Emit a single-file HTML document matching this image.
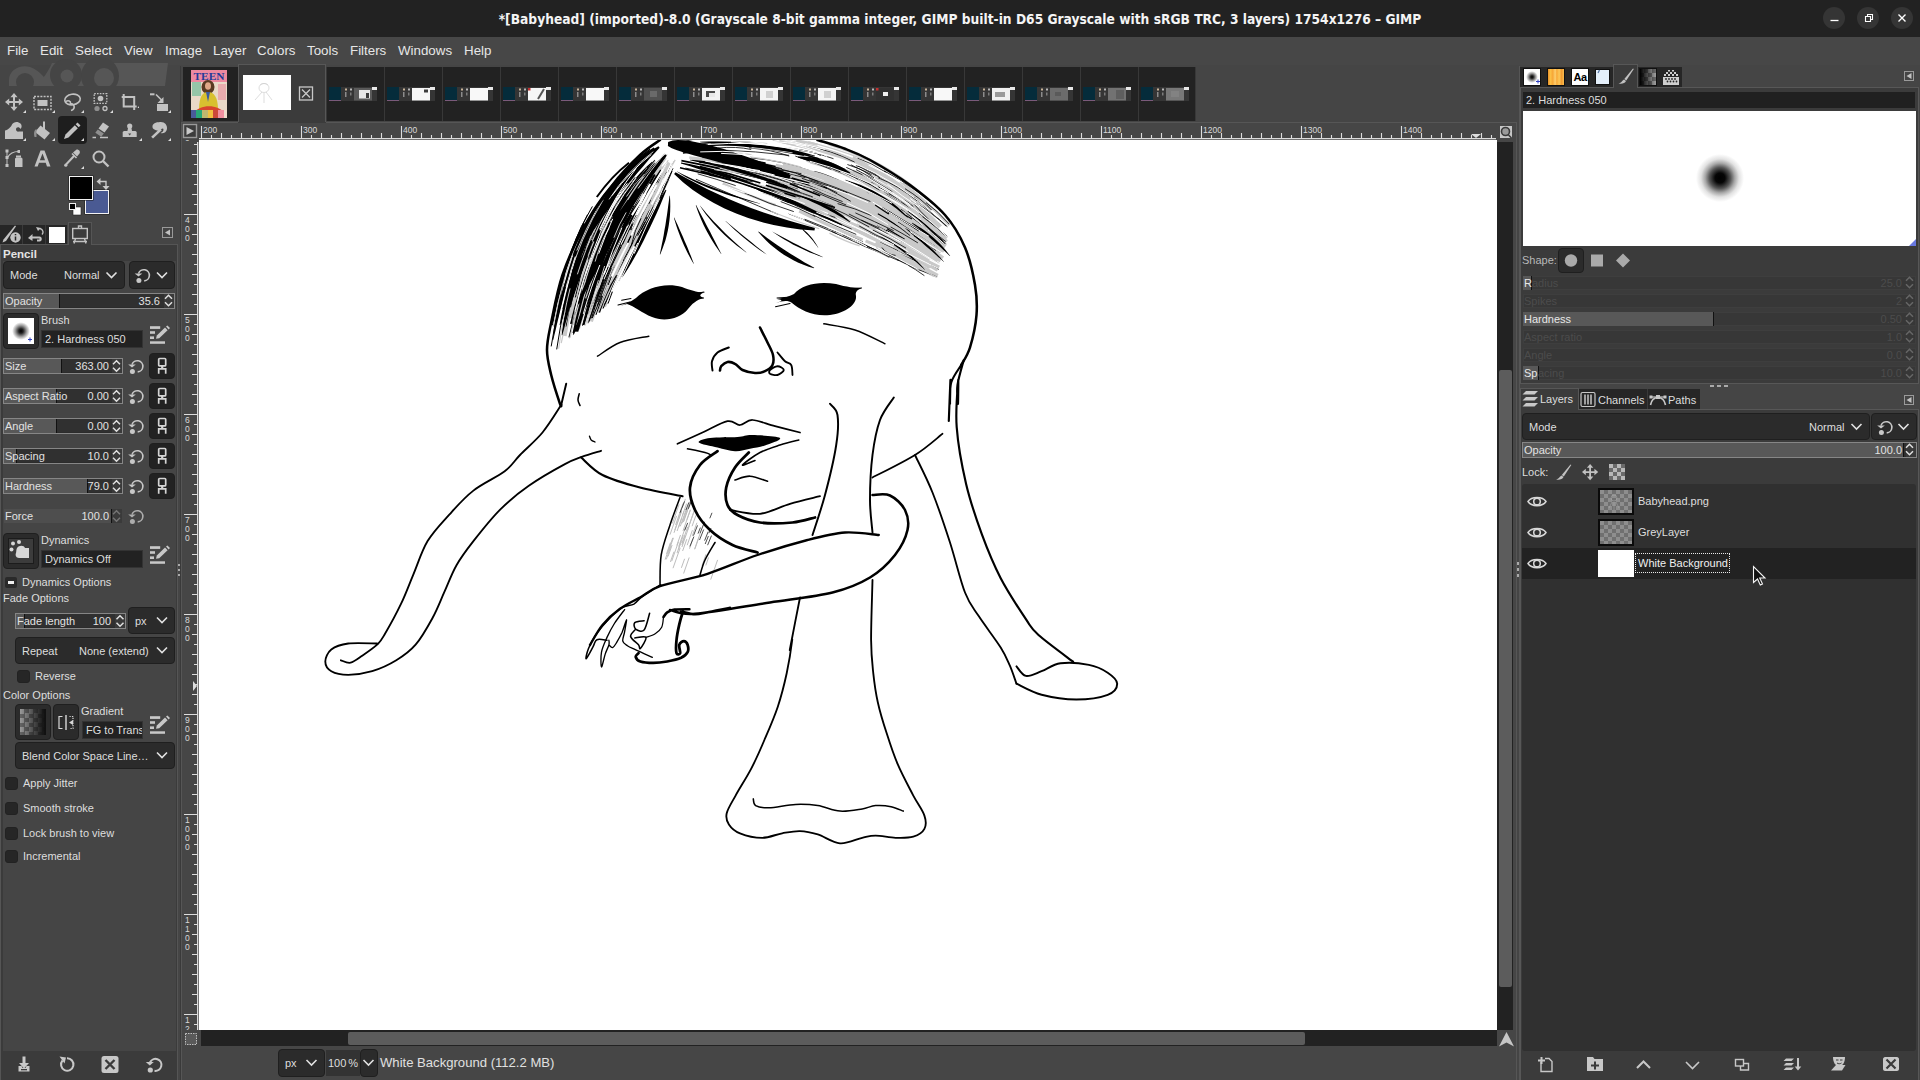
<!DOCTYPE html>
<html lang="en">
<head>
<meta charset="utf-8">
<title>GIMP</title>
<style>
*{box-sizing:border-box}
html,body{margin:0;padding:0}
body{width:1920px;height:1080px;position:relative;overflow:hidden;background:#454545;font-family:"Liberation Sans",sans-serif;font-size:11px;color:#dedede;line-height:1}
.abs{position:absolute}
#title{position:absolute;left:0;top:0;width:1920px;height:37px;background:#222222}
#title .t{position:absolute;left:0;width:1920px;top:13px;text-align:center;font-family:"DejaVu Sans Condensed","DejaVu Sans","Liberation Sans",sans-serif;font-weight:bold;font-size:13.66px;color:#f4f4f4;white-space:nowrap}
.wbtn{position:absolute;top:7px;width:22px;height:22px;border-radius:11px;background:#353535}
#menu{position:absolute;left:0;top:37px;width:1920px;height:28px;background:#474747}
#menu span{position:absolute;top:7px;font-size:13.33px;color:#e6e6e6;white-space:nowrap}
.lbl{position:absolute;white-space:nowrap;color:#dedede;font-size:11px}
.dark{background:#2b2b2b}
.btn{position:absolute;background:#2b2b2b;border:1px solid #1f1f1f;border-radius:4px}
.spin{position:absolute;height:16px;background:#303030;border:1px solid #868686;box-shadow:inset 0 -1px 0 #2c2c2c}
.spin .fill{position:absolute;left:0;top:0;bottom:0;background:#585858;border-right:1px solid #111}
.spin:after{content:'';position:absolute;right:0;top:0;bottom:0;width:10px;background:#3a3a3a}
.spin .l{position:absolute;left:1px;top:2px;font-size:11px;color:#e2e2e2;white-space:nowrap}
.spin .v{position:absolute;right:13px;top:2px;font-size:11px;color:#e2e2e2;white-space:nowrap}
.chk{position:absolute;width:11px;height:11px;background:#262626;border:1px solid #222;border-radius:3px}
svg{position:absolute;overflow:visible}
.dsl{left:1523px;width:393px;height:14px;background:#373737;box-shadow:inset 0 0 0 1px #3e3e3e;font-size:11px}
.dsl i{position:absolute;left:0;top:0;bottom:0;background:#585858;border-right:1px solid #111}
.dsl b{position:absolute;left:1px;top:2px;font-weight:normal;color:#e8e8e8}
.dsl s{position:absolute;top:2px;text-decoration:none;color:#4c4c4c}
.dsl u{position:absolute;right:14px;top:2px;text-decoration:none;color:#4c4c4c}
</style>
</head>
<body>
<div id="title">
<div class="t">*[Babyhead] (imported)-8.0 (Grayscale 8-bit gamma integer, GIMP built-in D65 Grayscale with sRGB TRC, 3 layers) 1754x1276 – GIMP</div>
<div class="wbtn" style="left:1823px"></div>
<div class="wbtn" style="left:1857px"></div>
<div class="wbtn" style="left:1891px"></div>
<svg style="left:1823px;top:7px" width="90" height="22" viewBox="0 0 90 22">
<path d="M7.5 13.5h8" stroke="#fff" stroke-width="1.3" fill="none"/>
<path d="M42.5 9.5h5v5h-5z M44.5 9.5v-2h5v5h-2" stroke="#fff" stroke-width="1.1" fill="none"/>
<path d="M75.5 7.5l7 7M82.5 7.5l-7 7" stroke="#fff" stroke-width="1.4" fill="none"/>
</svg>
</div>
<div id="menu">
<span style="left:7px">File</span><span style="left:40px">Edit</span><span style="left:75px">Select</span><span style="left:124px">View</span><span style="left:165px">Image</span><span style="left:213px">Layer</span><span style="left:257px">Colors</span><span style="left:307px">Tools</span><span style="left:350px">Filters</span><span style="left:398px">Windows</span><span style="left:464px">Help</span>
</div>
<!-- TOOLBOX -->
<svg style="left:0;top:60px" width="180" height="120" viewBox="0 60 180 120">
<!-- wilber banner -->
<g fill="#565656">
<path d="M9 86 L9 80 C9 70 20 64 30 67 C40 70 46 80 52 86 Z"/>
<path d="M52 63 L168 63 L165 86 L30 86 C40 84 46 76 52 63Z" />
</g>
<g fill="#454545">
<circle cx="25" cy="82" r="9"/>
<circle cx="66" cy="75" r="16"/>
<circle cx="100" cy="76" r="19"/>
<rect x="0" y="86" width="180" height="10"/>
</g>
<g fill="#565656"><circle cx="67" cy="76" r="6.5"/><circle cx="104" cy="78" r="10"/></g>
<rect x="0" y="86" width="180" height="6" fill="#454545"/>
<!-- selected tool bg -->
<rect x="58" y="116" width="29" height="28" rx="4" fill="#1e1e1e"/>
<g fill="#c2c2c2" stroke="none">
<!-- move -->
<g transform="translate(5,93)"><path d="M9 0l3.6 4.2H10v3.8h3.8V5.4L18 9l-4.2 3.6V10H10v3.8h2.6L9 18l-3.6-4.2H8V10H4.2v2.6L0 9l4.2-3.6V8H8V4.2H5.4z"/></g>
<!-- rect select -->
<g transform="translate(33.5,93)"><rect x="4" y="7" width="10" height="6"/><path d="M0.5 3.5h17v13h-17z" fill="none" stroke="#c2c2c2" stroke-width="1.4" stroke-dasharray="2 1.2"/></g>
<!-- lasso -->
<g transform="translate(63,93)" fill="none" stroke="#c2c2c2" stroke-width="1.6"><ellipse cx="9.5" cy="6.5" rx="7.8" ry="5.3" transform="rotate(-8 9.5 6.5)"/><path d="M3 8.5c2-1.5 5-.5 4.5 2 4 0 5.500 5.500 .5 7"/></g>
<!-- fuzzy/by color -->
<g transform="translate(91.500,93)"><circle cx="9" cy="5.500" r="2.800"/><path d="M2.700 0.700h12.600v9.600h-12.600z" fill="none" stroke="#c2c2c2" stroke-width="1.300" stroke-dasharray="1.600 1.200"/><circle cx="5.500" cy="15.500" r="2.600" fill="#8e8e8e"/><circle cx="13.500" cy="15.500" r="2" fill="none" stroke="#c2c2c2" stroke-width="1.300"/></g>
<!-- crop -->
<g transform="translate(120.700,93)" fill="none" stroke="#c2c2c2" stroke-width="2"><path d="M3 1v12.500h13"/><path d="M1 4h12.500v13" /></g>
<!-- unified transform -->
<g transform="translate(150,93)"><rect x="7" y="11" width="11" height="7"/><rect x="0" y="0.300" width="4.500" height="2"/><path d="M6 1.500l6.500 6.500" stroke="#c2c2c2" stroke-width="1.600" fill="none"/><path d="M13.500 4v6h-6z"/></g>
<!-- warp -->
<g transform="translate(5,121)"><path d="M0 18V9.500C3 9 6 6 7 3.500 8.500 0.500 13 0 15.500 2.500c1.500 1.500 1.500 4 0 5.500-1 -2.500-4.500-2.500-4.500 .5 0 1.500 1.500 2.500 3 2h4V18z"/></g>
<!-- bucket -->
<g transform="translate(33.500,121)"><path d="M9.500 0.500h2v8h-2z"/><path d="M7 4.500l9.500 7.500-5.500 6.500-9.500-7.500z"/><path d="M3 8c-2.500 1-3 4-2 8h2z" fill="#8e8e8e"/></g>
<!-- pencil -->
<g transform="translate(63,121)"><path d="M14.500 1.500l3 3-1.800 1.800-3-3z"/><path d="M11.800 4.200l3 3L5.500 16.500 1 18l1.500-4.500z"/></g>
<!-- eraser -->
<g transform="translate(91.500,121)"><path d="M11.500 1.500l6 4-4.500 6-6-4z"/><path d="M6.300 8.500l6 4-2.500 3.300-6-4z" fill="#8e8e8e"/><path d="M1 16.500h3.500M8.500 16.500h8" stroke="#c2c2c2" stroke-width="1.300" fill="none"/></g>
<!-- stamp -->
<g transform="translate(120.700,121)"><circle cx="9" cy="5" r="2.600"/><path d="M7.500 6h3l1 5h-5z"/><path d="M2 11.500c0-1 1-1.500 2-1.500h10c1 0 2 .5 2 1.500V16H2z"/><path d="M7.500 12.500h3L9 14.500z" fill="#454545"/></g>
<!-- smudge/dodge -->
<g transform="translate(150,121)"><path d="M10 1c4.500-.5 7.500 3 7 7-.5 3.500-4 5-6.500 4 3-1 3.500-3.500 2.500-4.500-1.500 0-3 2-4.500 2.500C5 9 2 8 2.500 5 3 2 6.500 1.300 10 1z"/><path d="M10 7.500l1.800 1.800L3 17.500 1.200 15.700z"/></g>
<!-- paths -->
<g transform="translate(5,149)"><rect x="0.500" y="0.500" width="3" height="3"/><rect x="0.500" y="7" width="3" height="3"/><rect x="0.500" y="15" width="3" height="3"/><path d="M2 2v15" stroke="#c2c2c2" stroke-width="1" fill="none"/><path d="M2.500 8.500C5 4 9 2.500 13.500 2.500" stroke="#c2c2c2" stroke-width="1.200" fill="none"/><rect x="12.500" y="1" width="2.500" height="3"/><rect x="11" y="6.500" width="5" height="2"/><path d="M10 10c0-1 1-1.500 2-1.500h3.500c1 0 2 .5 2 1.500v8H10z"/></g>
<!-- text A -->
<g transform="translate(33.500,149)"><path d="M7 1.500h4L17 17.500h-3.500l-1.300-3.800H5.500L4.200 17.500H1z M9 4.500L6.400 11.200h5.100z"/></g>
<!-- color picker -->
<g transform="translate(63,149)"><path d="M13 1c2-1.500 5 1.500 3.500 3.500l-2.500 3-4-4z"/><path d="M9 4.500l4.500 4.500" stroke="#c2c2c2" stroke-width="1.600" fill="none"/><path d="M10.500 6l1.500 1.500L4 16l-1.500-1.500z"/><circle cx="2.800" cy="16.200" r="1.600"/></g>
<!-- zoom -->
<g transform="translate(91.500,149)" fill="none" stroke="#c2c2c2"><circle cx="7.500" cy="8" r="5.500" stroke-width="2"/><path d="M11.500 12l5.500 5.500" stroke-width="2.400"/></g>
</g>
<!-- corner marks -->
<g fill="#dcdcdc">
<path d="M26 110v3h-3z"/><path d="M55 110v3h-3z"/><path d="M84 110v3h-3z"/><path d="M113 110v3h-3z"/><path d="M171 110v3h-3z"/>
<path d="M26 138v3h-3z"/><path d="M55 138v3h-3z"/><path d="M84 138v3h-3z"/><path d="M142 138v3h-3z"/><path d="M171 138v3h-3z"/>
<path d="M84 166v3h-3z"/>
<path d="M139 106v2h-1.500z"/>
</g>
</svg>
<!-- FG/BG colours -->
<div class="abs" style="left:85px;top:190px;width:24px;height:24px;background:#4a5a93;border:1px solid #f2f2f2;box-shadow:0 0 0 .5px #1c1c1c"></div>
<div class="abs" style="left:69px;top:176px;width:24px;height:24px;background:#000;border:1px solid #f2f2f2;box-shadow:0 0 0 .5px #1c1c1c"></div>
<svg style="left:66px;top:174px" width="50" height="44" viewBox="66 174 50 44">
<path d="M98.500 181.500h7.500v6.500" fill="none" stroke="#c8c8c8" stroke-width="1.400"/>
<path d="M100.500 178v7l-4-3.500z M102.500 186h7l-3.500 4z" fill="#c8c8c8"/>
<rect x="73" y="207" width="8" height="8" fill="#fff" stroke="#222" stroke-width=".6"/>
<rect x="69.500" y="203.500" width="6" height="6" fill="#000" stroke="#eee" stroke-width="1"/>
</svg>
<!-- tool options tab header -->
<div class="abs" style="left:0;top:225px;width:67px;height:20px;background:#262626"></div>
<div class="abs" style="left:22px;top:225px;width:1px;height:20px;background:#3a3a3a"></div>
<div class="abs" style="left:45px;top:225px;width:1px;height:20px;background:#3a3a3a"></div>
<div class="abs" style="left:0;top:244px;width:178px;height:836px;background:#3b3b3b;border:1px solid #555;border-bottom:none"></div><div class="abs" style="left:3px;top:261px;width:173px;height:790px;background:#454545"></div>
<div class="abs" style="left:68px;top:222px;width:24px;height:23px;background:#3b3b3b;border:1px solid #555;border-bottom:none"></div>
<div class="abs" style="left:49px;top:227px;width:16px;height:16px;background:#fff"></div>
<svg style="left:0;top:222px" width="180" height="24" viewBox="0 222 180 24">
<g fill="#c2c2c2">
<path d="M15 225.500l1 .8L6 241l-3.500 1.500 1-3z"/>
<circle cx="15.500" cy="237.500" r="5"/>
<path d="M28 238l4.500-4v2.500h7c3 0 3 5 0 5h-2.500v-2h2c1 0 1-1 0-1h-6.500v2.500z" />
<path d="M40 228.500c3 1 4 4 2 6" fill="none" stroke="#c2c2c2" stroke-width="1.400"/>
<path d="M36 227l5 1-3 3z"/>
</g>
<circle cx="15.500" cy="237.500" r="5" fill="#c2c2c2"/>
<path d="M15.500 236.500v4M15.500 234v1.300" stroke="#262626" stroke-width="1.500"/>
<g fill="none" stroke="#c2c2c2" stroke-width="1.400">
<rect x="72.700" y="228.500" width="14.600" height="10"/>
<path d="M78.500 228v-2h3v2M75.500 238.500l-1.500 5M84.500 238.500l1.500 5M73 241.500h14"/>
</g>
<rect x="162.500" y="227.500" width="10" height="10" fill="none" stroke="#9a9a9a" stroke-width="1"/>
<path d="M170 229.500v6l-5-3z" fill="#c2c2c2"/>
</svg>
<div class="lbl" style="left:3px;top:249px;font-weight:bold;font-size:11.500px;color:#e4e4e4">Pencil</div>
<!-- Mode -->
<div class="btn" style="left:3px;top:261px;width:122px;height:28px"></div>
<div class="lbl" style="left:10px;top:270px">Mode</div>
<div class="lbl" style="left:64px;top:270px">Normal</div>
<div class="btn" style="left:129px;top:261px;width:46px;height:28px"></div>
<svg style="left:0;top:260px" width="180" height="30" viewBox="0 260 180 30">
<path d="M106.500 272.500l5 5 5-5" fill="none" stroke="#e0e0e0" stroke-width="1.600"/>
<path d="M157 272.500l5 5 5-5" fill="none" stroke="#e0e0e0" stroke-width="1.600"/>

</svg>
<!-- Opacity -->
<div class="spin" style="left:3px;top:293px;width:172px"><div class="fill" style="width:56px"></div><div class="l">Opacity</div><div class="v" style="right:14px">35.6</div></div>
<!-- Brush -->
<div class="btn" style="left:3px;top:313px;width:36px;height:36px"></div>
<div class="abs" style="left:8px;top:318px;width:26px;height:26px;background:radial-gradient(circle at 50% 50%,#000 0,#222 12%,#999 30%,#fff 48%)"></div>
<div class="lbl" style="left:41px;top:315px">Brush</div>
<div class="abs" style="left:41px;top:330px;width:102px;height:18px;background:#222;border:1px solid #333"></div>
<div class="lbl" style="left:45px;top:334px">2. Hardness 050</div>
<!-- sliders -->
<div class="spin" style="left:3px;top:358px;width:120px"><div class="fill" style="width:58px"></div><div class="l">Size</div><div class="v">363.00</div></div>
<div class="spin" style="left:3px;top:388px;width:120px"><div class="fill" style="width:53px"></div><div class="l">Aspect Ratio</div><div class="v">0.00</div></div>
<div class="spin" style="left:3px;top:418px;width:120px"><div class="fill" style="width:53px"></div><div class="l">Angle</div><div class="v">0.00</div></div>
<div class="spin" style="left:3px;top:448px;width:120px"><div class="fill" style="width:13px"></div><div class="l">Spacing</div><div class="v">10.0</div></div>
<div class="spin" style="left:3px;top:478px;width:120px"><div class="fill" style="width:84px"></div><div class="l">Hardness</div><div class="v">79.0</div></div>
<div class="spin" style="left:3px;top:508px;width:120px;border-color:#454545;background:#454545;box-shadow:none"><div class="fill" style="width:108px;background:#4e4e4e"></div><div class="l">Force</div><div class="v">100.0</div></div>
<div class="btn" style="left:149px;top:353px;width:26px;height:26px;background:#222"></div>
<div class="btn" style="left:149px;top:383px;width:26px;height:26px;background:#222"></div>
<div class="btn" style="left:149px;top:413px;width:26px;height:26px;background:#222"></div>
<div class="btn" style="left:149px;top:443px;width:26px;height:26px;background:#222"></div>
<div class="btn" style="left:149px;top:473px;width:26px;height:26px;background:#222"></div>
<svg style="left:0;top:290px" width="180" height="240" viewBox="0 290 180 240">
<defs>
<g id="spn"><path d="M0 4.200l3.500-3.500 3.500 3.500M0 7.800l3.500 3.500 3.500-3.500" fill="none" stroke="#e0e0e0" stroke-width="1.500"/></g>
<g id="rst"><path d="M4 6.400A5.600 5.600 0 1 1 9.700 13.900" fill="none" stroke="#c8c8c8" stroke-width="1.600"/><path d="M.200 6.400h7.600l-3.800 3.200z" fill="#c8c8c8"/><circle cx="4.400" cy="13.500" r="2.500" fill="#c8c8c8"/></g>
<g id="lnk" fill="none" stroke="#d4d4d4" stroke-width="1.700"><rect x="1.700" y="1" width="7" height="7.400" rx="1"/><path d="M1.700 16.200V11.300H8.700V16.200"/><path d="M5.200 8.400v3" stroke-width="2.200"/></g>
<g id="edt" fill="#c8c8c8"><rect x="0" y="1.200" width="10.200" height="2.700"/><rect x="0" y="6.200" width="5" height="2.600"/><rect x="0" y="11.400" width="4" height="2.600"/><rect x="0" y="16.300" width="15" height="2.500"/><path d="M6 13.700L6.800 10.600 15 2.600 17.600 5.200 9.200 13.200z"/><path d="M16 1.600L17.400.400 20 3 18.600 4.400z"/></g>
</defs>
<use href="#spn" x="165" y="294.500"/>
<use href="#spn" x="113" y="360"/><use href="#spn" x="113" y="390"/><use href="#spn" x="113" y="420"/><use href="#spn" x="113" y="450"/><use href="#spn" x="113" y="480"/>
<use href="#spn" x="113" y="510" opacity=".35"/>
<use href="#rst" x="128" y="358"/><use href="#rst" x="128" y="388"/><use href="#rst" x="128" y="418"/><use href="#rst" x="128" y="448"/><use href="#rst" x="128" y="478"/><use href="#rst" x="128" y="508" opacity=".8"/>
<use href="#lnk" x="157" y="357.5"/><use href="#lnk" x="157" y="387.5"/><use href="#lnk" x="157" y="417.5"/><use href="#lnk" x="157" y="447.5"/><use href="#lnk" x="157" y="477.5"/>
<use href="#edt" x="150" y="325"/>
<path d="M28 339.500h4M30 337.500v4" stroke="#3040c0" stroke-width="1"/>
</svg>
<svg style="left:134px;top:267px" width="16" height="17" viewBox="0 0 16 17"><use href="#rst" x="0.500" y="0"/></svg>
<!-- Dynamics -->
<div class="btn" style="left:3px;top:533px;width:36px;height:36px"></div>
<div class="abs" style="left:8px;top:538px;width:26px;height:26px;background:#3c3c3c;border:1px solid #1c1c1c"></div>
<div class="lbl" style="left:41px;top:535px">Dynamics</div>
<div class="abs" style="left:41px;top:550px;width:102px;height:18px;background:#222;border:1px solid #333"></div>
<div class="lbl" style="left:45px;top:554px">Dynamics Off</div>
<div class="abs" style="left:5px;top:577px;width:12px;height:11px;background:#2a2a2a;border-radius:2px"></div>
<div class="abs" style="left:8px;top:581px;width:6px;height:3px;background:#f0f0f0"></div>
<div class="lbl" style="left:22px;top:577px">Dynamics Options</div>
<div class="lbl" style="left:3px;top:593px">Fade Options</div>
<div class="spin" style="left:15px;top:613px;width:111px"><div class="fill" style="width:9px;background:#585858"></div><div class="l">Fade length</div><div class="v" style="right:14px">100</div></div>
<div class="btn" style="left:128px;top:607px;width:47px;height:27px"></div>
<div class="lbl" style="left:135px;top:616px">px</div>
<div class="btn" style="left:15px;top:637px;width:160px;height:27px"></div>
<div class="lbl" style="left:22px;top:646px">Repeat</div>
<div class="lbl" style="left:79px;top:646px">None (extend)</div>
<div class="chk" style="left:17px;top:670px;width:13px;height:13px"></div>
<div class="lbl" style="left:35px;top:671px">Reverse</div>
<div class="lbl" style="left:3px;top:690px">Color Options</div>
<div class="btn" style="left:15px;top:704px;width:36px;height:36px"></div>
<div class="abs" style="left:20px;top:709px;width:26px;height:26px;background:linear-gradient(90deg,rgba(17,17,17,0),rgba(17,17,17,.55) 50%,#111 95%),repeating-conic-gradient(#666 0 25%,#999 0 50%) 0 0/9px 9px"></div>
<div class="btn" style="left:53px;top:704px;width:26px;height:36px"></div>
<div class="lbl" style="left:81px;top:706px">Gradient</div>
<div class="abs" style="left:82px;top:721px;width:61px;height:18px;background:#222;border:1px solid #333;overflow:hidden"><span style="position:absolute;left:3px;top:3px;white-space:nowrap;font-size:11px">FG to Transparent</span></div>
<div class="btn" style="left:15px;top:742px;width:160px;height:27px"></div>
<div class="lbl" style="left:22px;top:751px">Blend Color Space Line…</div>
<div class="chk" style="left:5px;top:777px;width:13px;height:13px"></div><div class="lbl" style="left:23px;top:778px">Apply Jitter</div>
<div class="chk" style="left:5px;top:802px;width:13px;height:13px"></div><div class="lbl" style="left:23px;top:803px">Smooth stroke</div>
<div class="chk" style="left:5px;top:827px;width:13px;height:13px"></div><div class="lbl" style="left:23px;top:828px">Lock brush to view</div>
<div class="chk" style="left:5px;top:850px;width:13px;height:13px"></div><div class="lbl" style="left:23px;top:851px">Incremental</div>
<svg style="left:0;top:530px" width="180" height="550" viewBox="0 530 180 550">
<use href="#edt" x="150" y="545"/><use href="#edt" x="150" y="715"/>
<use href="#spn" x="116.500" y="615"/>
<path d="M157 617.500l5 5 5-5M157 647.500l5 5 5-5M157 752.500l5 5 5-5" fill="none" stroke="#e0e0e0" stroke-width="1.600"/>
<!-- dynamics icon -->
<g fill="#d8d8d8"><circle cx="13" cy="543.500" r="2"/><circle cx="19" cy="542" r="2"/><circle cx="11.500" cy="549.500" r="2"/><path d="M17 548c2-3 7-3 8 0l4 0v10h-10c-3 0-4-3-3-5 .5-1.500 0-3 1-5z"/></g>
<!-- flip icon -->
<g fill="none" stroke="#d8d8d8" stroke-width="1.200"><path d="M62.500 716.500h-3.500v12h3.500"/><path d="M66 715v15" stroke-width="1.400"/><path d="M69.500 716.500h3.500v12h-3.500" stroke-dasharray="1.200 1.200"/></g><path d="M73 720v5l-4-2.500z" fill="#d8d8d8"/>
<!-- bottom buttons -->
<g fill="#c8c8c8">
<path d="M22.500 1056.500h3v6.500h3.500l-5 5.500-5-5.500h3.500z"/><path d="M18.500 1066h3l1 2h3l1-2h3v5.500h-11z"/>
<rect x="101.500" y="1056" width="17" height="17" rx="2.500"/>
</g>
<rect x="21" y="1069" width="6" height="1.300" fill="#3b3b3b"/>
<path d="M105.500 1060l9 9M114.500 1060l-9 9" stroke="#3b3b3b" stroke-width="2.400"/>
<g fill="none" stroke="#c8c8c8" stroke-width="2"><path d="M62.500 1060.500A6.200 6.200 0 1 0 67 1058.300"/><path d="M150 1062.300A6 6 0 1 1 154.500 1070.800"/></g>
<g fill="#c8c8c8"><path d="M59.500 1056.500l6.500 1-1.500 6z"/><path d="M145.800 1062h8l-4 3.600z"/><circle cx="150.300" cy="1070" r="2.600"/></g>
</svg>
<!-- pane separator -->
<div class="abs" style="left:180px;top:66px;width:1px;height:1014px;background:#3a3a3a"></div>
<!-- IMAGE TABS -->
<div class="abs" style="left:183px;top:67px;width:1012px;height:54px;background:#222"></div>
<svg style="left:191px;top:70px" width="36" height="48" viewBox="0 0 36 48">
<rect width="36" height="48" fill="#e9d9c8"/>
<rect x="0" y="0" width="36" height="12" fill="#ee8aa0"/>
<text x="18" y="10" text-anchor="middle" font-family="Liberation Serif,serif" font-weight="bold" font-size="10.500" fill="#243a9a" textLength="31" lengthAdjust="spacingAndGlyphs">TEEN</text>
<rect x="1" y="12" width="9" height="14" fill="#7fc0a0" opacity=".8"/>
<rect x="27" y="14" width="8" height="16" fill="#e8a0a8" opacity=".8"/>
<ellipse cx="17" cy="17" rx="6.500" ry="7" fill="#5a3a22"/>
<ellipse cx="17" cy="16" rx="3" ry="3.800" fill="#e0a888"/>
<path d="M8 40 C8 26 12 22 17 22 C23 22 27 27 27 40z" fill="#d8c030"/>
<path d="M15 22l2 10 2-10z" fill="#3a5aa0"/>
<path d="M3 43 C8 34 28 34 33 43z" fill="#d8452f"/>
<rect x="0" y="40" width="36" height="8" fill="#efdccc"/>
<rect x="0" y="40" width="5" height="8" fill="#4a5a9a"/><rect x="5" y="40" width="6" height="8" fill="#2aa878"/><rect x="11" y="40" width="6" height="8" fill="#c0b870"/><rect x="17" y="40" width="5" height="8" fill="#f0c040"/><rect x="22" y="40" width="5" height="8" fill="#cc4a3a"/><rect x="27" y="40" width="6" height="8" fill="#f090a0"/>
</svg>
<div class="abs" style="left:238px;top:64px;width:88px;height:59px;background:#3b3b3b;border:1px solid #575757;border-bottom:none"></div>
<div class="abs" style="left:243px;top:75px;width:48px;height:35px;background:#fff"></div>
<svg style="left:243px;top:75px" width="80" height="35" viewBox="243 75 80 35">
<g fill="none" stroke="#cfcfcf" stroke-width=".7"><ellipse cx="264" cy="88" rx="5" ry="4.500"/><path d="M260 85c2-2 6-2 8 0M262 92l-7 8M266 92l6 8M264 93v10"/></g>
<rect x="299.500" y="87" width="13" height="13" fill="none" stroke="#c8c8c8" stroke-width="1.300"/><path d="M302 89.500l8 8M310 89.500l-8 8" stroke="#c8c8c8" stroke-width="1.300"/>
</svg>
<svg style="left:326px;top:67px" width="870" height="54" viewBox="326 67 870 54">
<rect x="326" y="67" width="1" height="54" fill="#383838"/>
<rect x="329" y="87" width="48" height="14" fill="#353535"/>
<rect x="329" y="87" width="12" height="13" fill="#052c3b"/>
<rect x="329" y="100" width="12" height="1" fill="#7a5a7a"/>
<rect x="345" y="88.500" width="2" height="2" fill="#c8b49a"/><rect x="345" y="92" width="1.500" height="5" fill="#8c8c8c"/><rect x="350" y="88.500" width="2" height="2" fill="#b8b8b8"/><rect x="350" y="92.500" width="1.500" height="3" fill="#7c7c7c"/>
<rect x="372" y="87" width="5" height="3" fill="#e8e8e8"/>
<rect x="354" y="88" width="18" height="12.5" fill="#5a5a5a"/>
<rect x="359" y="90" width="11" height="8.5" fill="#e6e6e6"/>
<rect x="366" y="93" width="3" height="5" fill="#3a3a3a"/>
<rect x="384" y="67" width="1" height="54" fill="#383838"/>
<rect x="387" y="87" width="48" height="14" fill="#353535"/>
<rect x="387" y="87" width="12" height="13" fill="#052c3b"/>
<rect x="387" y="100" width="12" height="1" fill="#7a5a7a"/>
<rect x="403" y="88.500" width="2" height="2" fill="#c8b49a"/><rect x="403" y="92" width="1.500" height="5" fill="#8c8c8c"/><rect x="408" y="88.500" width="2" height="2" fill="#b8b8b8"/><rect x="408" y="92.500" width="1.500" height="3" fill="#7c7c7c"/>
<rect x="430" y="87" width="5" height="3" fill="#e8e8e8"/>
<rect x="412" y="88" width="18" height="12.5" fill="#f6f6f6"/>
<rect x="424" y="89.5" width="4" height="3" fill="#3c3c3c"/>
<rect x="442" y="67" width="1" height="54" fill="#383838"/>
<rect x="445" y="87" width="48" height="14" fill="#353535"/>
<rect x="445" y="87" width="12" height="13" fill="#052c3b"/>
<rect x="445" y="100" width="12" height="1" fill="#7a5a7a"/>
<rect x="461" y="88.500" width="2" height="2" fill="#c8b49a"/><rect x="461" y="92" width="1.500" height="5" fill="#8c8c8c"/><rect x="466" y="88.500" width="2" height="2" fill="#b8b8b8"/><rect x="466" y="92.500" width="1.500" height="3" fill="#7c7c7c"/>
<rect x="488" y="87" width="5" height="3" fill="#e8e8e8"/>
<rect x="470" y="88" width="18" height="12.5" fill="#f8f8f8"/>
<rect x="500" y="67" width="1" height="54" fill="#383838"/>
<rect x="503" y="87" width="48" height="14" fill="#353535"/>
<rect x="503" y="87" width="12" height="13" fill="#052c3b"/>
<rect x="503" y="100" width="12" height="1" fill="#7a5a7a"/>
<rect x="519" y="88.500" width="2" height="2" fill="#c8b49a"/><rect x="519" y="92" width="1.500" height="5" fill="#8c8c8c"/><rect x="524" y="88.500" width="2" height="2" fill="#b8b8b8"/><rect x="524" y="92.500" width="1.500" height="3" fill="#7c7c7c"/>
<rect x="546" y="87" width="5" height="3" fill="#e8e8e8"/>
<rect x="528" y="88" width="18" height="12.5" fill="#f6f6f6"/>
<rect x="528" y="88" width="2.5" height="2.5" fill="#c03030"/>
<path d="M544 89L538 99" stroke="#555" stroke-width="2"/>
<rect x="558" y="67" width="1" height="54" fill="#383838"/>
<rect x="561" y="87" width="48" height="14" fill="#353535"/>
<rect x="561" y="87" width="12" height="13" fill="#052c3b"/>
<rect x="561" y="100" width="12" height="1" fill="#7a5a7a"/>
<rect x="577" y="88.500" width="2" height="2" fill="#c8b49a"/><rect x="577" y="92" width="1.500" height="5" fill="#8c8c8c"/><rect x="582" y="88.500" width="2" height="2" fill="#b8b8b8"/><rect x="582" y="92.500" width="1.500" height="3" fill="#7c7c7c"/>
<rect x="604" y="87" width="5" height="3" fill="#e8e8e8"/>
<rect x="586" y="88" width="18" height="12.5" fill="#f8f8f8"/>
<rect x="616" y="67" width="1" height="54" fill="#383838"/>
<rect x="619" y="87" width="48" height="14" fill="#353535"/>
<rect x="619" y="87" width="12" height="13" fill="#052c3b"/>
<rect x="619" y="100" width="12" height="1" fill="#7a5a7a"/>
<rect x="635" y="88.500" width="2" height="2" fill="#c8b49a"/><rect x="635" y="92" width="1.500" height="5" fill="#8c8c8c"/><rect x="640" y="88.500" width="2" height="2" fill="#b8b8b8"/><rect x="640" y="92.500" width="1.500" height="3" fill="#7c7c7c"/>
<rect x="662" y="87" width="5" height="3" fill="#e8e8e8"/>
<rect x="644" y="88" width="18" height="12.5" fill="#505050"/>
<rect x="650" y="91" width="7" height="6" fill="#6a6a6a"/>
<rect x="674" y="67" width="1" height="54" fill="#383838"/>
<rect x="677" y="87" width="48" height="14" fill="#353535"/>
<rect x="677" y="87" width="12" height="13" fill="#052c3b"/>
<rect x="677" y="100" width="12" height="1" fill="#7a5a7a"/>
<rect x="693" y="88.500" width="2" height="2" fill="#c8b49a"/><rect x="693" y="92" width="1.500" height="5" fill="#8c8c8c"/><rect x="698" y="88.500" width="2" height="2" fill="#b8b8b8"/><rect x="698" y="92.500" width="1.500" height="3" fill="#7c7c7c"/>
<rect x="720" y="87" width="5" height="3" fill="#e8e8e8"/>
<rect x="702" y="88" width="18" height="12.5" fill="#f2f2f2"/>
<rect x="706" y="91" width="9" height="6" fill="#4a4a4a"/>
<rect x="709" y="93" width="6" height="4" fill="#e8e8e8"/>
<rect x="732" y="67" width="1" height="54" fill="#383838"/>
<rect x="735" y="87" width="48" height="14" fill="#353535"/>
<rect x="735" y="87" width="12" height="13" fill="#052c3b"/>
<rect x="735" y="100" width="12" height="1" fill="#7a5a7a"/>
<rect x="751" y="88.500" width="2" height="2" fill="#c8b49a"/><rect x="751" y="92" width="1.500" height="5" fill="#8c8c8c"/><rect x="756" y="88.500" width="2" height="2" fill="#b8b8b8"/><rect x="756" y="92.500" width="1.500" height="3" fill="#7c7c7c"/>
<rect x="778" y="87" width="5" height="3" fill="#e8e8e8"/>
<rect x="760" y="88" width="18" height="12.5" fill="#f4f4f4"/>
<rect x="766" y="91" width="7" height="7" fill="#d0d0d0"/>
<rect x="790" y="67" width="1" height="54" fill="#383838"/>
<rect x="793" y="87" width="48" height="14" fill="#353535"/>
<rect x="793" y="87" width="12" height="13" fill="#052c3b"/>
<rect x="793" y="100" width="12" height="1" fill="#7a5a7a"/>
<rect x="809" y="88.500" width="2" height="2" fill="#c8b49a"/><rect x="809" y="92" width="1.500" height="5" fill="#8c8c8c"/><rect x="814" y="88.500" width="2" height="2" fill="#b8b8b8"/><rect x="814" y="92.500" width="1.500" height="3" fill="#7c7c7c"/>
<rect x="836" y="87" width="5" height="3" fill="#e8e8e8"/>
<rect x="818" y="88" width="18" height="12.5" fill="#f4f4f4"/>
<rect x="824" y="91" width="7" height="7" fill="#d0d0d0"/>
<rect x="848" y="67" width="1" height="54" fill="#383838"/>
<rect x="851" y="87" width="48" height="14" fill="#353535"/>
<rect x="851" y="87" width="12" height="13" fill="#052c3b"/>
<rect x="851" y="100" width="12" height="1" fill="#7a5a7a"/>
<rect x="867" y="88.500" width="2" height="2" fill="#c8b49a"/><rect x="867" y="92" width="1.500" height="5" fill="#8c8c8c"/><rect x="872" y="88.500" width="2" height="2" fill="#b8b8b8"/><rect x="872" y="92.500" width="1.500" height="3" fill="#7c7c7c"/>
<rect x="894" y="87" width="5" height="3" fill="#e8e8e8"/>
<rect x="876" y="88" width="18" height="12.5" fill="#303030"/>
<rect x="883" y="92" width="5" height="4" fill="#f0f0f0"/>
<rect x="876" y="88" width="2.5" height="2.5" fill="#c03030"/>
<rect x="906" y="67" width="1" height="54" fill="#383838"/>
<rect x="909" y="87" width="48" height="14" fill="#353535"/>
<rect x="909" y="87" width="12" height="13" fill="#052c3b"/>
<rect x="909" y="100" width="12" height="1" fill="#7a5a7a"/>
<rect x="925" y="88.500" width="2" height="2" fill="#c8b49a"/><rect x="925" y="92" width="1.500" height="5" fill="#8c8c8c"/><rect x="930" y="88.500" width="2" height="2" fill="#b8b8b8"/><rect x="930" y="92.500" width="1.500" height="3" fill="#7c7c7c"/>
<rect x="952" y="87" width="5" height="3" fill="#e8e8e8"/>
<rect x="934" y="88" width="18" height="12.5" fill="#f8f8f8"/>
<rect x="964" y="67" width="1" height="54" fill="#383838"/>
<rect x="967" y="87" width="48" height="14" fill="#353535"/>
<rect x="967" y="87" width="12" height="13" fill="#052c3b"/>
<rect x="967" y="100" width="12" height="1" fill="#7a5a7a"/>
<rect x="983" y="88.500" width="2" height="2" fill="#c8b49a"/><rect x="983" y="92" width="1.500" height="5" fill="#8c8c8c"/><rect x="988" y="88.500" width="2" height="2" fill="#b8b8b8"/><rect x="988" y="92.500" width="1.500" height="3" fill="#7c7c7c"/>
<rect x="1010" y="87" width="5" height="3" fill="#e8e8e8"/>
<rect x="992" y="88" width="18" height="12.5" fill="#f0f0f0"/>
<rect x="995" y="92" width="10" height="5" fill="#9a9a9a"/>
<rect x="1022" y="67" width="1" height="54" fill="#383838"/>
<rect x="1025" y="87" width="48" height="14" fill="#353535"/>
<rect x="1025" y="87" width="12" height="13" fill="#052c3b"/>
<rect x="1025" y="100" width="12" height="1" fill="#7a5a7a"/>
<rect x="1041" y="88.500" width="2" height="2" fill="#c8b49a"/><rect x="1041" y="92" width="1.500" height="5" fill="#8c8c8c"/><rect x="1046" y="88.500" width="2" height="2" fill="#b8b8b8"/><rect x="1046" y="92.500" width="1.500" height="3" fill="#7c7c7c"/>
<rect x="1068" y="87" width="5" height="3" fill="#e8e8e8"/>
<rect x="1050" y="88" width="18" height="12.5" fill="#6c6c6c"/>
<rect x="1055" y="92" width="6" height="4" fill="#5a5a5a"/>
<rect x="1080" y="67" width="1" height="54" fill="#383838"/>
<rect x="1083" y="87" width="48" height="14" fill="#353535"/>
<rect x="1083" y="87" width="12" height="13" fill="#052c3b"/>
<rect x="1083" y="100" width="12" height="1" fill="#7a5a7a"/>
<rect x="1099" y="88.500" width="2" height="2" fill="#c8b49a"/><rect x="1099" y="92" width="1.500" height="5" fill="#8c8c8c"/><rect x="1104" y="88.500" width="2" height="2" fill="#b8b8b8"/><rect x="1104" y="92.500" width="1.500" height="3" fill="#7c7c7c"/>
<rect x="1126" y="87" width="5" height="3" fill="#e8e8e8"/>
<rect x="1108" y="88" width="18" height="12.5" fill="#727272"/>
<rect x="1116" y="90" width="8" height="9" fill="#5e5e5e"/>
<rect x="1138" y="67" width="1" height="54" fill="#383838"/>
<rect x="1141" y="87" width="48" height="14" fill="#353535"/>
<rect x="1141" y="87" width="12" height="13" fill="#052c3b"/>
<rect x="1141" y="100" width="12" height="1" fill="#7a5a7a"/>
<rect x="1157" y="88.500" width="2" height="2" fill="#c8b49a"/><rect x="1157" y="92" width="1.500" height="5" fill="#8c8c8c"/><rect x="1162" y="88.500" width="2" height="2" fill="#b8b8b8"/><rect x="1162" y="92.500" width="1.500" height="3" fill="#7c7c7c"/>
<rect x="1184" y="87" width="5" height="3" fill="#e8e8e8"/>
<rect x="1166" y="88" width="18" height="12.5" fill="#787878"/>
<rect x="1171" y="91" width="8" height="6" fill="#828282"/>
<rect x="1195" y="67" width="1" height="54" fill="#383838"/>
</svg>
<!-- CANVAS FRAME -->
<div class="abs" style="left:181px;top:122px;width:1336px;height:958px;background:#464646;border:1px solid #565656;border-bottom:none"></div>
<div class="abs" style="left:238px;top:122px;width:88px;height:1px;background:#3b3b3b"></div>
<div class="abs" style="left:1519px;top:66px;width:1px;height:1014px;background:#565656"></div>
<div class="abs" style="left:199px;top:140px;width:1298px;height:890px;background:#fff"></div>
<div class="abs" style="left:1497px;top:142px;width:16px;height:888px;background:#222"></div>
<div class="abs" style="left:1499px;top:370px;width:13px;height:617px;background:#5c5c5c;border-radius:2px"></div>
<div class="abs" style="left:201px;top:1030px;width:1296px;height:16px;background:#222"></div>
<div class="abs" style="left:348px;top:1032px;width:957px;height:13px;background:#5c5c5c;border-radius:2px"></div>
<svg style="left:181px;top:122px" width="1336" height="925" viewBox="181 122 1336 925"><defs><clipPath id="vrc"><rect x="183" y="140" width="14" height="890"/></clipPath></defs>
<rect x="183.500" y="124.500" width="13" height="13" fill="#3c3c3c" stroke="#9a9a9a" stroke-width="1.400"/><path d="M186.500 127v8l7.500-4z" fill="#c8c8c8"/>
<rect x="199" y="138" width="1297" height="1.300" fill="#dcdcdc"/>
<path d="M201.5 126V138M211.5 135V138M221.5 133V138M231.5 135V138M241.5 133V138M251.5 135V138M261.5 133V138M271.5 135V138M281.5 133V138M291.5 135V138M301.5 126V138M311.5 135V138M321.5 133V138M331.5 135V138M341.5 133V138M351.5 135V138M361.5 133V138M371.5 135V138M381.5 133V138M391.5 135V138M401.5 126V138M411.5 135V138M421.5 133V138M431.5 135V138M441.5 133V138M451.5 135V138M461.5 133V138M471.5 135V138M481.5 133V138M491.5 135V138M501.5 126V138M511.5 135V138M521.5 133V138M531.5 135V138M541.5 133V138M551.5 135V138M561.5 133V138M571.5 135V138M581.5 133V138M591.5 135V138M601.5 126V138M611.5 135V138M621.5 133V138M631.5 135V138M641.5 133V138M651.5 135V138M661.5 133V138M671.5 135V138M681.5 133V138M691.5 135V138M701.5 126V138M711.5 135V138M721.5 133V138M731.5 135V138M741.5 133V138M751.5 135V138M761.5 133V138M771.5 135V138M781.5 133V138M791.5 135V138M801.5 126V138M811.5 135V138M821.5 133V138M831.5 135V138M841.5 133V138M851.5 135V138M861.5 133V138M871.5 135V138M881.5 133V138M891.5 135V138M901.5 126V138M911.5 135V138M921.5 133V138M931.5 135V138M941.5 133V138M951.5 135V138M961.5 133V138M971.5 135V138M981.5 133V138M991.5 135V138M1001.5 126V138M1011.5 135V138M1021.5 133V138M1031.5 135V138M1041.5 133V138M1051.5 135V138M1061.5 133V138M1071.5 135V138M1081.5 133V138M1091.5 135V138M1101.5 126V138M1111.5 135V138M1121.5 133V138M1131.5 135V138M1141.5 133V138M1151.5 135V138M1161.5 133V138M1171.5 135V138M1181.5 133V138M1191.5 135V138M1201.5 126V138M1211.5 135V138M1221.5 133V138M1231.5 135V138M1241.5 133V138M1251.5 135V138M1261.5 133V138M1271.5 135V138M1281.5 133V138M1291.5 135V138M1301.5 126V138M1311.5 135V138M1321.5 133V138M1331.5 135V138M1341.5 133V138M1351.5 135V138M1361.5 133V138M1371.5 135V138M1381.5 133V138M1391.5 135V138M1401.5 126V138M1411.5 135V138M1421.5 133V138M1431.5 135V138M1441.5 133V138M1451.5 135V138M1461.5 133V138M1471.5 135V138M1481.5 133V138M1491.5 135V138" stroke="#dcdcdc" stroke-width="1.100" fill="none"/>
<text x="203" y="133" font-size="8.500" fill="#d8d8d8" font-family="Liberation Sans,sans-serif">200</text>
<text x="303" y="133" font-size="8.500" fill="#d8d8d8" font-family="Liberation Sans,sans-serif">300</text>
<text x="403" y="133" font-size="8.500" fill="#d8d8d8" font-family="Liberation Sans,sans-serif">400</text>
<text x="503" y="133" font-size="8.500" fill="#d8d8d8" font-family="Liberation Sans,sans-serif">500</text>
<text x="603" y="133" font-size="8.500" fill="#d8d8d8" font-family="Liberation Sans,sans-serif">600</text>
<text x="703" y="133" font-size="8.500" fill="#d8d8d8" font-family="Liberation Sans,sans-serif">700</text>
<text x="803" y="133" font-size="8.500" fill="#d8d8d8" font-family="Liberation Sans,sans-serif">800</text>
<text x="903" y="133" font-size="8.500" fill="#d8d8d8" font-family="Liberation Sans,sans-serif">900</text>
<text x="1003" y="133" font-size="8.500" fill="#d8d8d8" font-family="Liberation Sans,sans-serif">1000</text>
<text x="1103" y="133" font-size="8.500" fill="#d8d8d8" font-family="Liberation Sans,sans-serif">1100</text>
<text x="1203" y="133" font-size="8.500" fill="#d8d8d8" font-family="Liberation Sans,sans-serif">1200</text>
<text x="1303" y="133" font-size="8.500" fill="#d8d8d8" font-family="Liberation Sans,sans-serif">1300</text>
<text x="1403" y="133" font-size="8.500" fill="#d8d8d8" font-family="Liberation Sans,sans-serif">1400</text>
<rect x="197" y="142" width="1.300" height="888" fill="#dcdcdc"/>
<path d="M194 144.5H197M192 154.5H197M194 164.5H197M192 174.5H197M194 184.5H197M192 194.5H197M194 204.5H197M184 214.5H197M194 224.5H197M192 234.5H197M194 244.5H197M192 254.5H197M194 264.5H197M192 274.5H197M194 284.5H197M192 294.5H197M194 304.5H197M184 314.5H197M194 324.5H197M192 334.5H197M194 344.5H197M192 354.5H197M194 364.5H197M192 374.5H197M194 384.5H197M192 394.5H197M194 404.5H197M184 414.5H197M194 424.5H197M192 434.5H197M194 444.5H197M192 454.5H197M194 464.5H197M192 474.5H197M194 484.5H197M192 494.5H197M194 504.5H197M184 514.5H197M194 524.5H197M192 534.5H197M194 544.5H197M192 554.5H197M194 564.5H197M192 574.5H197M194 584.5H197M192 594.5H197M194 604.5H197M184 614.5H197M194 624.5H197M192 634.5H197M194 644.5H197M192 654.5H197M194 664.5H197M192 674.5H197M194 684.5H197M192 694.5H197M194 704.5H197M184 714.5H197M194 724.5H197M192 734.5H197M194 744.5H197M192 754.5H197M194 764.5H197M192 774.5H197M194 784.5H197M192 794.5H197M194 804.5H197M184 814.5H197M194 824.5H197M192 834.5H197M194 844.5H197M192 854.5H197M194 864.5H197M192 874.5H197M194 884.5H197M192 894.5H197M194 904.5H197M184 914.5H197M194 924.5H197M192 934.5H197M194 944.5H197M192 954.5H197M194 964.5H197M192 974.5H197M194 984.5H197M192 994.5H197M194 1004.5H197M184 1014.5H197M194 1024.5H197" stroke="#dcdcdc" stroke-width="1.100" fill="none"/>
<text clip-path="url(#vrc)" x="185" y="123" font-size="8.500" fill="#d8d8d8" font-family="Liberation Sans,sans-serif">3</text>
<text clip-path="url(#vrc)" x="185" y="132" font-size="8.500" fill="#d8d8d8" font-family="Liberation Sans,sans-serif">0</text>
<text clip-path="url(#vrc)" x="185" y="141" font-size="8.500" fill="#d8d8d8" font-family="Liberation Sans,sans-serif">0</text>
<text clip-path="url(#vrc)" x="185" y="223" font-size="8.500" fill="#d8d8d8" font-family="Liberation Sans,sans-serif">4</text>
<text clip-path="url(#vrc)" x="185" y="232" font-size="8.500" fill="#d8d8d8" font-family="Liberation Sans,sans-serif">0</text>
<text clip-path="url(#vrc)" x="185" y="241" font-size="8.500" fill="#d8d8d8" font-family="Liberation Sans,sans-serif">0</text>
<text clip-path="url(#vrc)" x="185" y="323" font-size="8.500" fill="#d8d8d8" font-family="Liberation Sans,sans-serif">5</text>
<text clip-path="url(#vrc)" x="185" y="332" font-size="8.500" fill="#d8d8d8" font-family="Liberation Sans,sans-serif">0</text>
<text clip-path="url(#vrc)" x="185" y="341" font-size="8.500" fill="#d8d8d8" font-family="Liberation Sans,sans-serif">0</text>
<text clip-path="url(#vrc)" x="185" y="423" font-size="8.500" fill="#d8d8d8" font-family="Liberation Sans,sans-serif">6</text>
<text clip-path="url(#vrc)" x="185" y="432" font-size="8.500" fill="#d8d8d8" font-family="Liberation Sans,sans-serif">0</text>
<text clip-path="url(#vrc)" x="185" y="441" font-size="8.500" fill="#d8d8d8" font-family="Liberation Sans,sans-serif">0</text>
<text clip-path="url(#vrc)" x="185" y="523" font-size="8.500" fill="#d8d8d8" font-family="Liberation Sans,sans-serif">7</text>
<text clip-path="url(#vrc)" x="185" y="532" font-size="8.500" fill="#d8d8d8" font-family="Liberation Sans,sans-serif">0</text>
<text clip-path="url(#vrc)" x="185" y="541" font-size="8.500" fill="#d8d8d8" font-family="Liberation Sans,sans-serif">0</text>
<text clip-path="url(#vrc)" x="185" y="623" font-size="8.500" fill="#d8d8d8" font-family="Liberation Sans,sans-serif">8</text>
<text clip-path="url(#vrc)" x="185" y="632" font-size="8.500" fill="#d8d8d8" font-family="Liberation Sans,sans-serif">0</text>
<text clip-path="url(#vrc)" x="185" y="641" font-size="8.500" fill="#d8d8d8" font-family="Liberation Sans,sans-serif">0</text>
<text clip-path="url(#vrc)" x="185" y="723" font-size="8.500" fill="#d8d8d8" font-family="Liberation Sans,sans-serif">9</text>
<text clip-path="url(#vrc)" x="185" y="732" font-size="8.500" fill="#d8d8d8" font-family="Liberation Sans,sans-serif">0</text>
<text clip-path="url(#vrc)" x="185" y="741" font-size="8.500" fill="#d8d8d8" font-family="Liberation Sans,sans-serif">0</text>
<text clip-path="url(#vrc)" x="185" y="823" font-size="8.500" fill="#d8d8d8" font-family="Liberation Sans,sans-serif">1</text>
<text clip-path="url(#vrc)" x="185" y="832" font-size="8.500" fill="#d8d8d8" font-family="Liberation Sans,sans-serif">0</text>
<text clip-path="url(#vrc)" x="185" y="841" font-size="8.500" fill="#d8d8d8" font-family="Liberation Sans,sans-serif">0</text>
<text clip-path="url(#vrc)" x="185" y="850" font-size="8.500" fill="#d8d8d8" font-family="Liberation Sans,sans-serif">0</text>
<text clip-path="url(#vrc)" x="185" y="923" font-size="8.500" fill="#d8d8d8" font-family="Liberation Sans,sans-serif">1</text>
<text clip-path="url(#vrc)" x="185" y="932" font-size="8.500" fill="#d8d8d8" font-family="Liberation Sans,sans-serif">1</text>
<text clip-path="url(#vrc)" x="185" y="941" font-size="8.500" fill="#d8d8d8" font-family="Liberation Sans,sans-serif">0</text>
<text clip-path="url(#vrc)" x="185" y="950" font-size="8.500" fill="#d8d8d8" font-family="Liberation Sans,sans-serif">0</text>
<text clip-path="url(#vrc)" x="185" y="1023" font-size="8.500" fill="#d8d8d8" font-family="Liberation Sans,sans-serif">1</text>
<text clip-path="url(#vrc)" x="185" y="1032" font-size="8.500" fill="#d8d8d8" font-family="Liberation Sans,sans-serif">2</text>
<path d="M1471 134h10l-5 4z" fill="#dcdcdc"/><path d="M193 681v10l4-5z" fill="#dcdcdc"/>
<rect x="1500" y="126" width="12" height="12" fill="#c6c6c6"/><circle cx="1505.500" cy="131.500" r="4" fill="#9a9a9a" stroke="#3a3a3a" stroke-width="1.600"/><path d="M1508.500 135l3 3" stroke="#3a3a3a" stroke-width="1.600"/>
<rect x="185.500" y="1033.500" width="11" height="11" fill="#5a5a5a" stroke="#c0c0c0" stroke-width="1" stroke-dasharray="1.500 1"/>
<path d="M1506.500 1032l7.500 14.500-7.500-4-7.500 4z" fill="#c6c6c6"/>
</svg>
<div class="btn" style="left:278px;top:1049px;width:47px;height:28px"></div>
<div class="lbl" style="left:285px;top:1058px">px</div>
<div class="abs" style="left:326px;top:1050px;width:34px;height:26px;background:#333"></div>
<div class="lbl" style="left:328px;top:1058px">100<span style="margin-left:2px">%</span></div>
<div class="btn" style="left:360px;top:1049px;width:18px;height:28px"></div>
<svg style="left:300px;top:1055px" width="80" height="16" viewBox="300 1055 80 16"><path d="M306.500 1060l5 5 5-5M363.500 1060l5 5 5-5" fill="none" stroke="#e0e0e0" stroke-width="1.600"/></svg>
<div class="lbl" style="left:380px;top:1056px;font-size:13.100px;color:#e0e0e0">White Background (112.2 MB)</div>
<!-- DRAWING -->
<svg style="left:199px;top:140px;overflow:hidden" width="1298" height="890" viewBox="199 140 1298 890">
<path d="M689.2 526L681.9 547M687.7 526.9L682 543.1M686.2 509.4L680.3 526.3M670.6 547.2L666.3 559.4M689.8 503.6L683.6 521.3M691 500.6L683.4 522.1M693 538.5L689.5 548.7M685.4 498.9L682.3 507.8M681.2 509.8L678.3 518.2M685.6 526.8L678.7 546.6M692.4 530.2L687.2 545.2M686.8 539.1L682.6 551M717.6 559.9L710.7 579.6M681 541.9L677 553.1M676.6 515.9L670 534.6M696.9 522.8L692.2 536.2M708.6 557.4L705.8 565.4M694.1 511L689 525.6M684.6 558.8L681.4 567.8M699 537L694.9 548.8M683.1 503.4L675.6 524.9M672.1 545L668.1 556.4M679.1 504.3L672.4 523.4M687 509L682 523.3M690.3 509.8L686.9 519.7M673.4 537.9L668.5 551.8M681.6 511.2L674 532.8M680.2 547.8L673 568.2M684 511.1L677.1 531M672.8 537.8L665.1 559.6M681.4 511.2L674.8 530M681.7 518.4L678.5 527.4M686.6 503.6L682.6 515M683.4 535.3L678.4 549.6M689.2 557.5L683.6 573.5M674 551.7L670.4 561.9M706 554.3L702 565.8M690.5 509.8L683 530.9M694.5 510.2L687.4 530.5M685.2 535.4L681.9 544.9M690.6 500.4L686.7 511.7M678.5 541.7L671.7 561.2M680.5 535L676.8 545.4M670.4 542.7L666.5 553.9M700.4 532.7L694.6 549.3M695.9 515.4L692.1 526.2" stroke="#bdbdbd" stroke-width="1" fill="none"/>
<path d="M691.5 500.7L688.3 508.8M688.9 502.4L685.9 510M687.7 522.9L684.7 530.4M711.5 535.6L707.6 545.2M700.4 527.6L698 533.6M684.5 501.4L680 512.8M711 528L708.9 533.2M697.5 525.4L693.5 535.6M712 512.8L709.8 518.3M704.6 521.8L700.1 533.1M703.7 529.5L699.5 540M693.9 536.6L689.9 546.4M708.4 536L705.2 544M708.2 531.6L704.6 540.6" stroke="#222" stroke-width=".8" fill="none"/>
<path d="M803 187.5Q858.5 209.6 906.9 236.4M840.5 185.9Q892.8 207 937.8 243M786.4 174.2Q848.7 188.9 896.4 219.7M784.7 187.5Q828.2 202.4 867.9 220.8M810.8 160.6Q872.3 176.7 924.4 216.4M851.2 199Q899.3 217.5 942.3 250.8M807.2 159Q867.3 177.4 915 209.7M858.4 163.3Q896.9 182.3 930.8 210.7M762.3 165.1Q827.8 180.8 885.2 211.5M847 206.9Q897 228.6 938.4 259.9M779.9 189.3Q828.7 204.1 872 223.7M856.7 223.8Q892.1 240 928.3 262.2M824.5 178.9Q886.4 199.5 937.2 241.7M827.4 215.4Q886.4 238.4 931.9 265.8M858.5 185.3Q905.2 208.5 946 242.5M852.1 158.6Q891.4 178.3 926.5 206.4M839.5 195.7Q895.1 218.4 940.6 251.7M793.4 179Q854.9 196.8 904 227.3M855.4 228.6Q895.5 245.4 930.6 266.5M828.4 188.2Q866 204 902 224.2M767.8 185.1Q826.1 198.5 873 221.8M848.6 190.7Q898.8 213.8 945.1 247M762.4 188.4Q809.3 201.5 852 218.8M773.4 186.6Q829.4 204.5 876.3 227.9M779.1 175.7Q825.9 188.8 867.9 209.1M843.9 172Q898.3 196.8 945 240" stroke="#c9c9c9" stroke-width="6" fill="none"/>
<path d="M722.7 183.5Q748.1 195.5 775.6 205.3M779.3 141.4Q823.5 150.5 861.9 164.5M856.5 199.1Q885.3 212.9 913.5 233.2M815.5 184.6Q841.8 195.9 864.3 202.8M900 181.2Q925.5 199.9 949.4 225.2M847 150Q891.8 166.9 926.6 198.4M691.7 159.8Q742.3 164.3 785.6 176.5M898.1 224.4Q922.6 237.2 943.7 251.8M876.2 247.5Q906.7 262.1 934.2 275.9M689.3 157.5Q721.9 161 755.4 164.7M815.7 200.9Q850.1 212 880.9 228.5M828.6 144.1Q868.7 156.1 905.9 181.9M887.7 194.3Q919.1 212.8 947.1 237.7M823.5 149.8Q865.5 160.6 901.9 186.2M701.6 165Q753 172.9 797.1 188.8M753.3 170.1Q794.8 179.6 832.1 197.2M882.6 205.6Q917.8 219.6 945.9 244.8M897.8 221.2Q921.8 233.2 944.2 251.3M715.1 165.7Q754.1 174.5 791.4 185.7M792.4 190.9Q820.3 200.3 846.4 212.7M746 183.1Q769.2 188.3 790.8 197.6M822.3 190.8Q856.4 207.1 891.5 224.5M696.7 137Q728.4 132.1 759 132M811.6 198.9Q847 211.5 881.7 229.9M712.9 137.8Q760.6 132.5 804.8 144M834.8 179.1Q882 197.9 920.2 224.2M881.8 175.7Q904.1 188.2 922.5 204.4M734.1 135Q780.2 136.1 817.6 144.6M849 184.8Q879.4 197.9 907 215M864.6 198Q893.2 212.6 914.5 226.7" stroke="#c9c9c9" stroke-width="2.5" fill="none"/>
<path d="M632.6 184.6Q611.3 217.2 595.1 260.6M653.1 171.2Q624.9 206.2 606.3 256.2M641.6 221Q624.7 258.9 601.6 307.5M665 170.4Q649.2 199.9 630 239.6M615.2 230.9Q598.8 266.2 584.9 313.8M618.3 247.4Q603.8 281.1 590.5 321.3M643.6 220.6Q626.6 252.7 608.4 292.2M655.3 195.7Q643.9 221.2 630.6 245.8M602 211.6Q575.8 262.6 564.1 335.9M637 165.8Q614.1 188.3 595.5 224.5M599 227.9Q580.5 264.5 570.5 318.1M619.9 203Q589.9 253.7 575.3 325.5M631.4 203.3Q612 231.1 598.7 270.6M630.8 224.6Q613 262.6 597.3 309.8" stroke="#c9c9c9" stroke-width="5" fill="none"/>
<path d="M603.2 273.6Q595.4 295.7 587.7 323.6M669.4 163.5Q658.8 182 650.1 202.2M657.6 189.6Q641.7 218.6 626 252.1M653.5 165.3Q629.5 193.5 612.2 235.2M603.2 228.7Q594.5 251.8 585.3 275.5M603.2 232.3Q589.7 259.8 582.9 289M647.6 181.2Q632.9 202.9 621.3 229M591 235.3Q576.7 265.9 568 304.8M648.7 150.7Q617.1 175.4 596.5 212M643.3 158.1Q628.7 173.8 614.1 194.2M621.8 248.5Q609.1 274.5 599.7 305.9M632 227.7Q618.8 258.2 603.9 291.8M607 243.6Q591.5 283.4 578.9 329.2M656 163.8Q633 190.4 613.8 227.1M653.9 172.4Q645 186.2 636.1 203.4M653.8 162.4Q627.4 191.3 607 236.5M622.4 268.2Q614.2 287.2 605 306.7M608.6 249.5Q597.2 273.6 591.4 303.2M648.9 184.2Q631.2 213.1 614.1 246.5M653.5 162.2Q635.9 182 621.5 208.3M665.9 158.1Q648.5 180.1 631.4 211.9M620.8 241.8Q605.6 277.2 589.8 319.5" stroke="#c9c9c9" stroke-width="2" fill="none"/>
<path d="M662.1 176.9Q657.4 187.4 648.8 200.3M669.8 175.4Q663.8 187.4 656.3 201.9M668.4 165Q662.4 172.2 658.2 180.4M654.7 174Q646.4 184.6 638.6 196.6M663 175.9Q657.5 187 651.2 194.1M667.7 162.6Q660.9 169 656.2 176.5M653.8 173.6Q647.8 182.6 638.5 193.8M668.8 179.5Q663.6 188.4 660.4 200.7M661.7 166.3Q653.1 177.4 647.7 188M669.4 176.6Q664.7 182.8 659.9 192.7" stroke="#c9c9c9" stroke-width="2" fill="none"/>
<path d="M656.4 175.6Q649.6 188 641.1 204.6M651.1 176.6Q637.8 192.6 627 212.8M616.5 211.9Q602.8 237.1 593 269.4M589.8 247.4Q580.1 272.1 575.4 297.4M604.2 246.1Q591.2 271.9 584 301.7M614.2 251.7Q603.2 277.7 593.5 308M661.1 173Q650.2 195.4 637.8 218.9M646.2 171.7Q629.6 195.3 615.5 224.1M641.5 158.6Q630.3 167.7 621.7 179M645.1 221.9Q632.4 244.6 620.3 269.2M629.4 212.4Q620.6 230.8 610.1 251.7M612.1 257.4Q600.9 285.5 591.5 318.2M603 247.6Q589.6 283.1 576.8 331.9M612.5 186.1Q596.7 208.6 587.6 233.1M631.1 171.1Q613.1 192.8 596.2 225.7M666.4 155.2Q652.3 172.9 641.9 192.1M650.1 209.2Q640.8 227.6 629.8 248M652.7 167.9Q642.4 181.3 634.8 198M661.5 179.9Q653.4 195.9 643.1 214.7M619.9 189Q594.7 222.8 580.9 273.5M623.9 241.3Q609.5 274.3 596 314.9M638.4 214Q631.1 226.2 626.5 239.3M618 195.5Q601.6 221 590.2 252.7M627.6 173.6Q605.8 199.3 587.8 238.3M656.6 148.9Q645.5 158.5 633.7 168.2M664.9 183.2Q654.5 204.3 641.4 229.8M627.9 192.2Q619.8 205 611.2 220.3M649.8 165.5Q631.2 188.8 615.1 219.5M630.8 218Q617.7 245.1 604.7 278.7M616.4 219.9Q602.8 245.2 594.9 276.3M595.3 232.2Q587.4 252.1 578.8 278.2M631.6 228.6Q618.6 256.1 608.1 285M673.3 161.7Q667.2 175.6 660.5 185.9M590.7 233.9Q581.8 255.6 574.5 283.9M618.5 228.1Q603.7 253.8 594.3 287M625.2 238.8Q609.2 267.6 597.5 302M635.1 177.3Q613.2 204.2 597.3 242.1M649.8 149.5Q636.5 158 626.9 170.2M573.1 268.6Q563.4 305.7 556.7 349.4M590.6 240.9Q581.2 267 572.5 297.1M628.9 226.7Q612.1 260.4 597.5 297.7M587.5 214.6Q563.2 259.8 552.4 325.3M620.8 274.9Q612.6 288.2 608 303.6M618.4 178.4Q607.7 190.1 600.2 206.4M621.3 191.3Q601.5 217.1 588.3 253.7M638.7 159.8Q624.4 171 612.8 185.6M655.2 165.4Q639.1 187 623.9 213.6M564.7 275.3Q557.1 309.1 551.2 346.4M629.2 195.3Q610.9 227.4 596.6 266.5M628.3 260.8Q618.3 281.1 604.2 304.9M650 149.2Q629.2 162.5 612.2 186.3M592.4 206.4Q568.5 244.9 557.7 300.4M672.1 171.2Q660.4 199.6 645.3 229M618.3 189.3Q602.3 209.7 590.5 235.8M657.6 194.1Q651.5 206.1 646.4 218.7M646.5 153.8Q631.5 165.2 620.6 179.5M596.3 279.1Q588.4 300.3 582.5 325.7M666.7 182.2Q657.5 201.5 650.7 219.4M617.6 183.7Q591 218.8 574 272.8M625.5 259.5Q613.2 284 603 308.6M638.5 200.8Q628.5 220.1 616.6 243.4M614.5 220.2Q598.5 251.7 588 286.1M607.7 280Q601.2 298.4 592.2 318.1M604.7 274.9Q596.8 295.8 588.6 322.5M584.6 258Q572.1 288.1 565.9 326.6M606.1 252.6Q596.4 280.5 585.8 313.9M662.2 170.7Q653.4 189.8 645.2 206.3M615.7 188.8Q589.9 221.8 575 269.2M633.2 242.3Q623.7 257.9 616.7 275.8M600.7 220.1Q585.1 255.1 572.1 299.1M643.1 229.5Q635.8 247.1 625.2 265.4M649.9 164.1Q630.1 184.1 614.5 215M598.6 237.5Q590 259.4 582.4 286.3M591.3 278.2Q582 302.1 575.1 332M588.9 282.6Q579.9 305.8 573.4 334.6M617 194.3Q602.2 214.2 589.7 241.6M613.7 182.9Q595.6 204.6 584.8 230.3M633.8 205.8Q623.5 226.4 614.5 250.7M659.2 204.1Q648.4 229 632.1 258.8M652.5 175.9Q632.7 205.5 617.3 243.5" stroke="#000" stroke-width="1" fill="none"/>
<path d="M586.3 234.5Q572.3 268.7 563.4 309M652.6 162.5Q628.2 183.3 612.7 216M573.2 258.1Q564.3 285.3 556.8 318.8M584.4 254.9Q575.3 279.6 570 307.1M655.7 178.3Q642.1 200.4 628.5 230.8M642.9 211.9Q639.1 222.6 631.8 233.8M629 162.7Q611.7 176.1 596.8 197M635.1 166.7Q611.2 193.3 594.4 231M589.1 275.8Q580 301.6 573.5 333.3M610.8 206.2Q597.4 228 588.4 256.1M635 164.7Q618.3 181.6 605.8 201M581.1 288.6Q575.3 305.3 571 324M614.5 228.5Q605.7 247.3 595.4 271.3M583.2 259.1Q571.4 289 563.9 325M643.4 200.6Q633.6 215.1 625.2 233.9M618.2 222.3Q602.9 257.3 589 296.7M633.7 209.8Q617.5 234.2 606.7 264M610.7 207.1Q599.5 229 587.5 259.3M619.2 223Q614.2 238.8 607.3 254.6M606.2 221.1Q590.5 251.5 578.6 295.5M599.2 275.9Q591 298.4 583.5 325.1M639.1 181.5Q628.6 198.8 617.6 219.2M641.1 204.6Q628.9 225.5 617.5 249.5M620.9 228.4Q613.2 246 605.4 265.9M589.2 285.7Q581.6 308.1 575.5 330.9M661.1 170.2Q647.1 189.7 636.3 216.4M654.8 174.5Q641 198.3 626.2 226.7M595.3 272.8Q586.8 300.4 577.3 331.5M640.2 191.2Q631.6 205.8 622.9 222.9M629.8 188Q620 203.6 610.1 225.8M617.6 223Q604.4 252.1 590.9 285.4M644.6 204.9Q632.2 230.6 621.1 258.8M629.8 196.8Q619.9 214.7 608.5 234.4M589.5 221.2Q580 239 572.2 261M584.2 223.2Q563.9 264 551.8 323.4M595.5 215.7Q583.9 239.6 574.2 267.5M610 222.3Q591.6 258.5 580.4 307M616.2 275.3Q605.6 292.2 599.1 312.5M612 231.7Q598.7 264.4 583.8 310.1M665.8 171.6Q659.2 181.3 654.2 192.8" stroke="#000" stroke-width="2" fill="none"/>
<path d="M686.7 137.9Q726.3 128.1 764.3 128.9M744.9 183.9Q774.6 193.2 800.2 205M710.6 143.8Q731.3 140.8 752.9 142.4M740.6 165.7Q780.6 173.5 818.3 187.4M814.3 208.8Q824.6 214.3 839.8 219.2M901.1 209.3Q925.3 226.3 944.2 244.2M750.9 157.9Q782 160.5 809.3 170.6M905 188.7Q921.4 198.6 931.7 210.1M858.1 165.8Q897.3 185.9 930.4 214.2M771.7 169.6Q785.9 170 801.4 173.7M721.1 150.5Q737.6 152.2 753.1 154.9M730.2 137.3Q747.7 135.9 759.1 136.2M754.3 172Q789 181.8 821.6 191.3M908.4 265.4Q914.9 268.9 924.4 275.7M674 147.1Q694.3 144.7 712.3 142.7M681 149.6Q702.2 149.7 722.5 149.7M822.4 222Q843.1 232.7 863 241.9M888.9 250.8Q901.2 254 915.6 260.9M715.2 164.3Q759.4 172.7 797.6 185.6M804.6 219.2Q826.4 228 847.6 236.2M806.3 146Q831.1 149.9 854.6 162.1M884 191Q916.3 207.2 944.5 234.9M801.8 178.3Q819.3 182.9 837.3 192.8M910.3 256.2Q924.7 263.9 938.7 269.4M757 189.2Q773.8 196.6 792.5 204.1M896.8 259.5Q916.2 270 937.2 276.6M856.1 169.6Q884.7 184 913.2 206.1M869.4 233.4Q902 246.8 930.1 263.5M711.6 134.3Q754.4 130.4 790.4 134.6M722.8 150.1Q755.4 151.2 789.1 155.3M831.7 231.4Q865.6 247.4 898.8 260.6M812.8 214.9Q834.1 225.6 856.2 234.4M680.9 142.1Q707.3 135.8 730.9 134.4M909.9 227.6Q923.4 235 934.6 245.2M744.5 192.9Q768.6 203.8 793.8 211.6M747.6 169Q781.9 177.4 813.2 187.4M702.4 157.6Q727.1 156.3 754.5 163.6M706.9 157.8Q732.6 159.6 758.7 164.1M857.5 158Q871.5 162.9 886.5 172.6M914.2 197.2Q931.5 212.5 947.4 226.7M893 192.7Q918.1 206.6 939.1 227.1M770.7 166.3Q796.3 172.2 818.3 181.6M798.2 174.1Q837.3 187.2 870.4 201.5M861.3 220.1Q878.7 227.1 894.5 236M873.5 180.6Q897.4 192.2 919.1 212.7M833.6 170.1Q849.9 175.9 865.6 182.6M880.2 242.5Q900.1 251.8 917.5 259.6M820.7 202.6Q845.5 213.2 869.2 227M822.5 164.2Q849.5 175.7 874.1 186M784.8 200.3Q799.3 207.7 813.8 213.2M866.9 192.1Q880.5 198.6 890.8 203.2M814.2 171.4Q824.8 173.6 838.8 180.4M717.6 148Q736.5 146.2 751.2 149.5M883.9 170.7Q919.6 189.3 950.1 219.8M758.5 166.5Q783.1 173.2 805.4 177.6M713.7 167.4Q757.1 177.1 798.1 189.2M766.8 146.1Q803.9 147.6 833.5 158.7M685.4 168.1Q722.1 174.6 752.8 181.9M918.7 219.4Q929.9 229.3 945.7 241.5M846.2 174.2Q876.3 187 904.1 204.6M749 147.9Q771.7 149.7 789.2 156.1M809.4 179.7Q828.3 185.6 847.5 192.9M777 165.7Q804.2 172.8 830.7 179.6M754 132.5Q765.2 131.1 780.3 135.1M848.9 214Q879.5 229.1 908.7 244.8M697.7 173.8Q715.5 178.7 735.7 185.6M695.9 179.2Q739.9 198.2 777.8 214.2M788.3 213.4Q818.8 226 851.4 239.8M791.6 152.6Q821 156.3 845.5 169.5M687.9 147.6Q728.3 141.4 764.9 146.5" stroke="#000" stroke-width="0.8" fill="none"/>
<path d="M766.2 182.1Q803.9 192.6 833.3 205.1M733.4 144.1Q779.7 145.6 818.8 159.1M680 167.8Q711.3 174.8 740.9 182.7M708.5 174.8Q727.7 179 750 186.1M765.8 185.3Q801.2 196.4 835 207.4M721.5 157Q756 161.9 782.1 168.1M791.7 177.9Q811.3 183.5 826.9 188.6M681.4 160.6Q724.7 169.1 763.5 178.7M769.1 179.5Q781.7 183.3 795.9 191.6M682.9 153Q700.4 150.6 713.8 152.7M684.1 145.7Q704.6 145.5 726.9 144.7M739.9 162.9Q766.3 168 789.6 174M751.2 184.7Q774.5 189.7 800.3 198M789.8 183.7Q806.3 190.1 820.2 195.8M724.2 144.2Q766.6 147.5 803.9 155.2M797.3 181.8Q819.1 187.6 836.8 195.7M723 145Q755.4 144.7 786.6 149.3M699.3 162.2Q725.7 163 754.5 168M699.9 166.6Q729.8 173.3 760.4 182.9M758.3 189.2Q772.9 196.2 789.4 202.4M713.2 156Q741.1 157.8 765.5 163.1M700.6 170.9Q734.2 180.1 766 191.7" stroke="#000" stroke-width="1.6" fill="none"/>
<path d="M914.3 235.7Q925.5 245.2 935.8 250.8M885 227.4Q894.3 233 904.6 239.2M875.1 204.9Q890.9 215.7 910.8 227.8M898.2 221.7Q918.1 233.6 939.3 247.6M896.6 188.9Q909.7 195.9 921.1 208.4M916.2 238.5Q929.6 248 941.1 257.3M887.9 212.7Q903.1 219.6 918.7 231.5M877.9 186.8Q893.5 193.7 908.6 206.9M869.4 183.7Q891.4 198.5 915.4 210.7M877.8 213.7Q895.2 223 907.2 234.2M871.5 181.9Q892.7 189.3 908.3 204.2M882.3 207.7Q904.6 221.4 929.3 235.7M907.9 211Q926.6 224.6 945.2 243.9M877.2 225.1Q896.2 236.2 910.9 244.4M902.2 229.6Q918 241.8 934 251.4M889.7 204.1Q898.5 211.4 912 219" stroke="#000" stroke-width="1.2" fill="none"/>
<path d="M649.5 204.4Q633.6 234 617.4 268.7M657.3 183.2Q645.9 202.6 634.2 224.1M650.6 176.4Q638.3 189.7 628 206.8M630.8 229.9Q622.5 247.6 614.7 265.4M649.5 173.3Q633.6 193.1 622.8 217.7M661.2 160Q647.5 172.6 638.9 188.1M640 181.1Q625 203.1 611.6 226.8M669.3 162.6Q658.9 183.9 648.7 209.3M637.8 235.7Q629.1 255.3 617.6 275.4M643.3 193.7Q627.6 221.6 611.2 253.5M655 160.9Q631 187.9 611.5 227.9M622.3 223.5Q609.4 251.2 597.8 281.3" stroke="#c9c9c9" stroke-width="2.5" fill="none"/>
<path d="M635.3 224.3Q622.9 248.3 611.3 276.4M643.8 157.9Q628.2 171.2 618.8 185.2M581.7 261.3Q570.7 298.9 561.2 343.2M636.3 169Q610.1 194.1 593.3 233M620.7 249.2Q610.7 270.8 602.3 295.8M610.5 216.4Q602.8 231.8 594.5 252M630.3 255.9Q624.5 266.9 619.3 281.2M647.1 167.9Q637.9 179.1 630.7 190.6M628 179.1Q606.9 204.6 592 241.4M590.4 258.3Q578 292.4 569.4 338.3M666 170.4Q658.8 182.7 651.3 200.5M663.1 156.3Q653.6 169.7 642.8 183.8M593.8 241.6Q583.3 266.7 577.1 295.2M646.3 183.2Q638.8 194 631.5 205M632.3 179.5Q622.3 193.5 614.5 207.5M667.2 154.4Q657.3 163.7 649.7 175.9M622.2 257.8Q609.6 283.6 598 312.9M622.6 260.5Q616.1 274.6 608.3 287.3M588.7 279.9Q582.5 301.9 576.9 324.9M675.2 159.9Q669.1 170.7 660.3 185.7M668.2 160.2Q653 184.5 637.3 214.9M669.2 172.7Q661.2 188.4 653.7 206.7M617.2 223.3Q600.1 254.7 585.6 298.4M628.7 224.7Q616.4 243.2 608.2 266.8" stroke="#c9c9c9" stroke-width="1.2" fill="none"/>
<path d="M779.2 197.3Q808.3 204.3 829.9 217.3M865.6 240.9Q893.6 252 920 267.2M862.3 187.4Q881.9 200.9 905.8 214.4M881.6 236.1Q912 253.8 939.3 267M875.7 177.2Q905.1 192.5 934 217.1M861.7 192.6Q881.9 201.1 898.7 213M844.4 209.1Q866.8 217.6 886.8 229M888.3 233.1Q916.6 246.4 940.4 261M783 164.6Q826 173.6 860.4 190.7M875.8 242.2Q908.2 259.5 937.9 275.2M775.8 165.3Q820.5 174.2 860.9 193.2M888.8 214Q917.3 232.2 942.1 248.8M787.5 187.1Q816.7 197.3 844 208.1M799.2 211.1Q832.5 227.7 862.7 239.7M809.2 183.6Q844.2 196.8 877.2 212.3M884 220.4Q915.9 238.8 943.2 257.7M852.8 170.8Q889.9 187.6 918.8 213.7M783.5 165.7Q823.3 176.8 859 193.5M898.6 249.3Q919.1 259.2 937.5 270.3M901.5 194Q919.7 209.1 939.3 227.3M837.2 217.7Q867 229.5 897.8 244.4M871.7 179.6Q909.3 197.2 941.2 226" stroke="#c9c9c9" stroke-width="3" fill="none"/>
<path d="M897.1 200.4Q915.1 211.6 937.1 230.4M829.4 233.1Q844.9 241.3 859.6 245.9M751.5 147.7Q772.2 149.1 792.6 152.7M818.6 216.5Q837.2 220.4 851.1 227.6M879.5 228.1Q911.2 245.6 937.2 261.2M786.2 136.6Q827 145.1 864.7 159.7M750 156.9Q775.3 160.1 800.8 166.8M762.8 193Q801 203.6 833 219.5M900.2 241.7Q920.7 252.7 939.2 263.6M795.5 196.9Q813 201.7 825.2 207.6M864 170.7Q900.5 188.9 935.6 219.5M727.6 160.1Q763.2 167 795.3 176.5M772.7 140.5Q793.1 145.5 810.8 149.2M879.4 248.1Q907.7 261.4 936.8 277.4M771.2 211.5Q795.4 221.3 819.2 228.8M719.8 168.2Q751.1 175.1 782.8 184.3M800 143.2Q836.4 149.1 868.5 167.8M795.4 182.1Q811.4 187.5 829.3 194.1M836.2 221.1Q868.9 238.1 900.8 253M714.2 169.7Q736.8 172.8 753.8 175.6M794.6 181.8Q832.5 192.9 870.5 213.3M701.4 142.3Q738.2 140.5 767.3 143.6M872.2 187.6Q891.2 195.9 909.2 208.9M846.4 171.5Q869.5 181 887.2 194.9M870.7 174.8Q892.2 184.6 911.2 196.9M836.9 233Q864.3 243.8 889.1 257.6M754.9 183.9Q771.5 188.6 784.3 193.6M852 202.1Q876.8 214.5 904.1 231M832.4 169.4Q860.7 178.8 883.3 193.7M746.7 143.6Q764.6 146.5 781.2 148.9" stroke="#c9c9c9" stroke-width="1.2" fill="none"/>
<path d="M812.9 191Q829.5 198.2 846.2 205M887.6 219.9Q900.9 227.5 910.1 235.6M842.8 234.9Q864.8 243.9 889.3 257.2M890.6 226.9Q904.3 234.4 917.9 242.9M878.2 177.8Q898.3 185.6 917 200.7M911.7 201.5Q920.9 212 928.8 219.5M926 202.6Q938.1 211.1 949.2 224.1M780.7 201.6Q799.9 208.3 815.3 216.6M809.6 187.8Q826.8 195.7 842.6 201.6M838.6 168.6Q854.4 175.4 870 184.2M922.4 216.6Q935.8 226.6 947.1 236.3M805.7 209.7Q829.7 219.3 851.7 229.1M881.9 247.5Q886.6 254.6 895.6 255.4M846.3 167.4Q869.6 176.6 892.4 191.8M866.1 246.1Q887.5 252.9 906 263.5M915.7 202.8Q933 213.4 946.2 226.2M795.3 156.1Q813.6 161.7 831.3 169.5M924.6 224.9Q933.3 234.6 943.3 240.8M855.9 165.7Q868 168.3 879.9 177.8M837.6 203.6Q855.1 208.2 871.5 215.6M850.9 164.8Q863.7 170.1 874 177.9M888.9 211.2Q905.3 223.1 919.9 230.7M823.9 186.7Q837.7 194.1 850.8 201.3M832.6 168.9Q845.5 173.4 858.1 179.4M847.4 164.5Q860.7 168.8 871.5 174.7M799.1 150.6Q813.8 150.9 820.7 155.6M767.2 181.3Q793.1 190 812.8 196.9M859.2 226Q875.3 235.2 892.2 242.7M855.4 212.9Q874.4 221.4 893.7 230.7M872.9 230.1Q890.8 238.5 906 248.1" stroke="#000" stroke-width="0.8" fill="none"/>
<path d="M639.7 206.5Q635.6 216.3 628.2 228.5M618.6 234.6Q608.4 256.8 598.6 280.3M649.8 191.8Q639.8 209.7 628.3 230.5M599.7 288.2Q594.8 298.7 588.2 314M631.6 182.3Q616 201.5 602.1 228.8M625.1 213.3Q613.3 233.4 603.1 259.6M620.9 247Q612.8 263.1 605 278.3M626.3 227.9Q615.8 252.9 603 281.2M611.4 268.1Q604.3 286.3 597.1 306M654.6 163.1Q648.4 170.1 643.5 176.5M593.7 279.5Q588 298.8 580.4 318.7M625.4 194Q616 207.9 607.9 225M609.9 247.6Q601.8 264.7 595.9 284.2M619.5 227Q615.6 235.7 611.6 246.3M628.9 210.6Q617.6 232.2 607.3 257.9M652.7 213.8Q647.9 222.2 643.2 234.4M673 168.2Q668.4 179.3 661.7 188.4M633.6 182.5Q625.7 193.6 621.3 203.8M593.8 249.7Q589.6 262.5 586 274.7M665.3 155.5Q650.7 169.4 639.8 187.6M581.6 291.3Q574.5 313.6 568.9 337.3M639.3 207.6Q630.5 226.4 622.7 244.4M641.1 218.3Q634.5 230 631.4 244.9M602.9 282.5Q595.6 301.5 589.3 320.6" stroke="#000" stroke-width="0.9" fill="none"/>
<path d="M653.7 147.5L645.1 153.1L637 159.2L629.4 165.8L622.2 172.7L615.4 179.9L608.9 187.4L602.8 195.1L597.1 203L591.8 211.1L586.8 219.5L582.3 228L578.3 236.8L574.9 245.9L572.2 255.2L575.8 256.8L581.3 249L586.5 241.2L591.6 233.4L596.8 225.7L602.2 218L607.6 210.4L613.2 202.9L618.9 195.5L624.8 188.1L630.9 180.7L637.1 173.3L643.5 165.9L649.9 158.3L656.3 150.5ZM658.4 146.2L652.7 149.4L647.3 153.1L642.1 157L637 161.3L632.2 165.8L627.5 170.4L623 175.4L618.7 180.5L614.5 185.8L610.5 191.3L606.8 197L603.2 202.9L600 209L597.1 215.5L598.9 216.5L603.4 211.2L607.8 206L612 200.7L616.2 195.6L620.5 190.5L624.7 185.5L629 180.6L633.3 175.8L637.6 171.1L642 166.4L646.4 161.8L650.9 157.2L655.3 152.6L659.6 147.8ZM599.5 211.7L596.2 216.2L593.2 220.7L590.3 225.4L587.7 230.2L585.2 235.1L582.9 240L580.7 245L578.7 250.1L576.8 255.3L575.2 260.5L573.7 265.7L572.3 271L571.3 276.4L570.5 281.9L571.5 282.1L573.5 277.1L575.5 272L577.4 266.9L579.3 261.9L581.3 256.9L583.3 251.9L585.3 247L587.4 242L589.5 237.1L591.7 232.2L593.9 227.2L596.1 222.3L598.3 217.3L600.5 212.3ZM665.3 154.3L658.8 160.3L652.4 167.1L646 174.7L639.7 183L633.4 192L627.1 201.7L620.8 212.1L614.4 223.1L608.1 234.8L601.8 247.2L595.5 260.3L589.2 274L583.1 288.4L577.1 303.6L578.9 304.4L586.5 290.1L593.9 276.2L600.9 263L607.8 250.3L614.4 238.3L620.9 226.8L627.2 215.9L633.4 205.6L639.4 195.9L645.3 186.8L650.9 178.3L656.4 170.3L661.7 162.8L666.7 155.7ZM665.6 189.8L661 197.1L656.6 204.3L652.5 211.3L648.7 218.2L645 224.8L641.6 231.3L638.3 237.6L635.3 243.8L632.4 249.7L629.8 255.5L627.4 261.1L625.2 266.5L623.3 271.7L621.6 276.8L622.4 277.2L625.4 272.8L628.4 268.1L631.4 263.1L634.4 257.8L637.5 252.2L640.6 246.4L643.7 240.4L646.8 234L650 227.4L653.3 220.5L656.6 213.4L659.9 206L663.1 198.2L666.4 190.2ZM639.6 199.8L634.8 206.6L630.1 213.5L625.6 220.5L621.4 227.5L617.3 234.6L613.4 241.7L609.8 248.9L606.3 256.1L603 263.3L599.9 270.5L597 277.8L594.3 285.1L591.8 292.5L589.6 299.9L590.4 300.1L593.7 293.2L597.1 286.3L600.4 279.3L603.8 272.3L607.2 265.3L610.7 258.2L614.2 251.1L617.8 244L621.5 236.8L625.2 229.6L628.9 222.4L632.7 215.1L636.5 207.7L640.4 200.2ZM627.7 199.8L623.1 206.3L618.7 212.7L614.6 219.2L610.7 225.7L607 232.2L603.5 238.7L600.2 245.1L597.2 251.6L594.3 258L591.7 264.4L589.3 270.8L587.2 277.2L585.3 283.6L583.7 289.9L584.3 290.1L586.8 284.1L589.5 278.1L592.1 271.9L594.9 265.8L597.8 259.5L600.7 253.2L603.8 246.9L607 240.4L610.3 233.9L613.7 227.4L617.2 220.7L620.8 214L624.5 207.1L628.3 200.2ZM591.6 239.8L588.3 244.9L585.1 250.3L582.1 255.7L579.2 261.4L576.6 267.2L574 273.1L571.7 279.1L569.4 285.3L567.4 291.6L565.5 298L563.7 304.6L562.1 311.2L560.8 318L559.6 324.9L560.4 325.1L562.7 318.5L565 312L567.3 305.6L569.6 299.3L571.8 293.1L574.1 287L576.3 280.9L578.6 274.9L580.9 269L583.2 263.1L585.5 257.3L587.8 251.6L590.1 245.9L592.4 240.2ZM587.7 254.9L584.6 260.4L581.7 265.9L579 271.6L576.5 277.2L574.2 282.9L572.1 288.6L570.1 294.4L568.3 300.1L566.7 305.9L565.3 311.7L564.1 317.5L563.1 323.3L562.3 329.1L561.7 334.9L562.3 335.1L563.9 329.4L565.4 323.8L567 318.2L568.6 312.6L570.3 306.9L572.1 301.3L573.9 295.6L575.8 289.9L577.7 284.2L579.7 278.5L581.8 272.7L583.9 266.9L586.1 261L588.3 255.1ZM601.8 269.9L599.4 274L597.1 278.2L594.9 282.4L592.7 286.6L590.6 290.8L588.6 295.1L586.6 299.4L584.7 303.7L582.9 308L581.1 312.3L579.4 316.7L577.8 321.1L576.2 325.5L574.8 329.9L575.2 330.1L577.4 326L579.4 321.8L581.5 317.6L583.5 313.4L585.5 309.1L587.4 304.9L589.4 300.6L591.3 296.3L593.2 292L595.1 287.7L596.9 283.3L598.7 279L600.5 274.5L602.2 270.1ZM569.8 269.9L567.8 274.8L566 279.7L564.3 284.7L562.7 289.7L561.2 294.6L559.8 299.6L558.5 304.6L557.4 309.7L556.3 314.7L555.4 319.7L554.5 324.8L553.8 329.8L553.2 334.9L552.8 340L553.2 340L554.4 335.1L555.6 330.2L556.7 325.2L557.9 320.3L559.1 315.3L560.3 310.3L561.5 305.4L562.7 300.4L563.9 295.4L565.2 290.3L566.4 285.3L567.7 280.3L569 275.2L570.2 270.1ZM654.8 159.8L650.3 164.5L645.9 169.2L641.7 174.1L637.7 179L633.9 184L630.2 189L626.7 194.2L623.5 199.4L620.4 204.7L617.4 210L614.7 215.4L612.2 220.8L609.9 226.3L607.8 231.9L608.2 232.1L611 226.8L613.8 221.6L616.7 216.4L619.7 211.2L622.8 206.1L626 200.9L629.3 195.8L632.6 190.7L636.1 185.6L639.7 180.5L643.5 175.5L647.3 170.4L651.2 165.3L655.2 160.2ZM667.9 146.1L671.8 148.2L676.3 150L681.6 151.7L687.6 153.5L694.4 155.4L701.9 157.5L710.2 159.8L719.2 162.2L728.9 164.8L739.4 167.5L750.7 170.4L762.7 173.4L775.6 176.3L789.3 179L790.7 175L778 169L765.8 163.8L754.1 159.3L743.1 155.4L732.7 151.9L722.9 148.8L713.8 146.2L705.3 144.1L697.5 142.4L690.3 141.1L683.8 140.3L677.9 140.1L672.6 140.6L668.1 141.9ZM680.9 163.5L690.2 166.3L699.9 169.4L709.9 172.6L720.3 176.1L730.9 179.8L741.9 183.8L753.2 188.1L764.8 192.7L776.8 197.5L789.1 202.6L801.7 207.9L814.7 213.6L828.1 219.4L841.8 225.5L842.2 224.5L829 217.5L816 210.9L803.2 204.7L790.7 198.9L778.4 193.5L766.5 188.5L754.8 183.9L743.4 179.6L732.3 175.8L721.5 172.3L711 169.2L700.7 166.5L690.8 164.3L681.1 162.5ZM690 160.3L696.4 161.7L703.1 163.2L709.9 164.8L717 166.5L724.3 168.4L731.8 170.5L739.5 172.7L747.5 175L755.6 177.5L764 180.2L772.6 183L781.5 186L790.6 189.1L799.9 192.3L800.1 191.7L791.1 187.7L782.2 184L773.5 180.5L765 177.3L756.6 174.4L748.5 171.7L740.5 169.3L732.7 167.2L725.1 165.2L717.7 163.6L710.5 162.2L703.5 161.1L696.6 160.3L690 159.7ZM797.9 157.5L801.5 158.7L805.1 159.9L808.7 161.1L812.3 162.2L815.9 163.4L819.5 164.5L823.2 165.6L826.9 166.8L830.6 167.9L834.3 169L838.1 170.2L841.9 171.3L845.8 172.3L849.8 173.4L850.2 172.6L846.7 170.3L843.2 168.2L839.6 166.3L836 164.6L832.3 163L828.6 161.6L824.8 160.4L821 159.3L817.2 158.4L813.4 157.6L809.6 157.1L805.8 156.7L801.9 156.5L798.1 156.5ZM700 142.3L708.9 142.9L717.6 143.6L726.2 144.3L734.8 145.1L743.2 145.9L751.6 146.8L759.8 147.7L767.9 148.8L776 149.9L783.9 151L791.8 152.3L799.6 153.6L807.3 154.9L814.9 156.3L815.1 155.7L807.6 153.5L800 151.5L792.3 149.7L784.4 148.1L776.5 146.6L768.4 145.4L760.2 144.3L751.9 143.3L743.5 142.6L735 142L726.4 141.7L717.7 141.5L708.9 141.5L700 141.7ZM844.9 180.2L850.3 182.4L855.4 184.7L860.5 187L865.4 189.4L870.2 191.9L874.8 194.4L879.4 197.1L883.8 199.8L888 202.6L892.2 205.6L896.3 208.6L900.2 211.7L904.1 214.9L907.9 218.1L908.1 217.9L904.8 214.1L901.2 210.5L897.5 207.1L893.5 203.8L889.4 200.7L885.1 197.7L880.6 194.9L876 192.3L871.3 189.8L866.3 187.4L861.2 185.3L856 183.3L850.6 181.4L845.1 179.8ZM799.9 196.2L804.2 198.2L808.3 200.1L812.3 201.9L816.2 203.8L820 205.6L823.7 207.5L827.3 209.3L830.8 211.2L834.2 213L837.5 214.9L840.7 216.7L843.8 218.5L846.9 220.4L849.8 222.2L850.2 221.8L847.6 219.4L844.8 217.1L841.9 214.8L838.8 212.7L835.6 210.6L832.2 208.6L828.7 206.7L825 204.8L821.2 203.1L817.3 201.4L813.2 199.9L808.9 198.4L804.6 197L800.1 195.8ZM911.9 223.2L914.7 225.4L917.5 227.6L920.3 229.8L923 232.1L925.8 234.3L928.5 236.6L931.2 238.9L933.9 241.3L936.5 243.7L939.2 246.1L941.9 248.6L944.5 251.1L947.2 253.6L949.8 256.1L950.2 255.9L947.9 252.9L945.6 250L943.2 247.3L940.7 244.6L938.2 242L935.5 239.5L932.8 237.1L930.1 234.7L927.2 232.5L924.3 230.3L921.4 228.3L918.4 226.4L915.3 224.5L912.1 222.8ZM904.9 228.1L907.7 230.5L910.4 232.8L913.2 235.2L916 237.6L918.8 239.9L921.6 242.3L924.3 244.8L927.1 247.2L929.9 249.6L932.7 252.1L935.5 254.6L938.2 257.1L941.1 259.6L943.9 262.1L944.1 261.9L941.6 259L939.1 256.2L936.5 253.5L933.9 250.8L931.2 248.2L928.4 245.7L925.7 243.2L922.8 240.8L920 238.5L917.1 236.2L914.2 234L911.2 231.9L908.2 229.8L905.1 227.9ZM879.9 236.1L883.7 238.5L887.4 240.8L891 243.2L894.5 245.5L897.9 247.9L901.2 250.3L904.5 252.7L907.6 255.1L910.7 257.6L913.7 260.1L916.6 262.5L919.4 265L922.2 267.6L924.9 270.1L925.1 269.9L922.7 267.1L920.2 264.3L917.5 261.5L914.7 258.9L911.8 256.3L908.7 253.8L905.5 251.3L902.3 248.9L898.8 246.5L895.3 244.2L891.7 242L887.9 239.9L884.1 237.8L880.1 235.9Z" fill="#000"/>
<path d="M594.9 229.3Q585.7 248.4 577.4 274.3M603.2 199.9Q580.7 236.4 566.1 286.7M664.5 153.6Q651.4 169.6 638 188.5M582.7 229.3Q563.5 270.4 553.2 326.9M626.2 212.4Q619.4 223.3 613.9 237.7M617.7 199.7Q607.7 215.1 600.8 235.6M570.1 288.4Q563.2 315.1 558.7 348.7M653.3 151.7Q627.4 170.6 609.1 199.4M608.8 228.4Q600.7 241.8 595.1 261.6M644.4 174.1Q634.7 183.6 626.5 196.5M618 176.2Q594.7 207.6 576.8 250.6M598.4 280.2Q591.6 302.4 585.3 325.5M580.7 288.8Q575 312 570.2 337.6M604.6 266Q597.6 289.3 589.5 313.7" stroke="#c9c9c9" stroke-width="1" fill="none"/>
<path d="M730.9 178.7Q768.2 190 804.8 203.7M700.2 151.9Q746.5 149.1 786.2 159.9M879.2 192.9Q897.9 201.5 917.5 216.5M705.3 161.2Q740.2 165.5 774.6 175M847.1 203Q868.8 211.9 888.1 224.7M816.3 212.2Q855.7 226.6 894.1 244.9M707.8 144.5Q750.8 141.2 786.5 147.2M710.9 133.5Q764.1 130.5 808.2 140.9M712.1 183.1Q743.9 196.4 771.8 207M707.1 139.2Q752.8 131.4 796.3 141M835.3 217.1Q865 230.8 893.3 247M868.5 165.2Q885.6 172.5 902.9 182.7M721.1 153.4Q764.4 154.2 800.5 165.4M832.5 229.1Q851.1 237.2 867 246.8M740.1 168.4Q774.7 175.9 808.9 184M840.5 171.8Q854.8 177.4 870.4 188.8M731 141.7Q765.5 144.2 798.9 149.5M886.9 231.5Q912.9 247.6 939.7 264.5M744.4 167.9Q769.3 172.8 792.2 182.7M910.2 198.5Q930.3 212.1 946.5 229M797.3 137.9Q831.6 142 860.2 154.6M867.6 228.3Q887.8 239.1 908.4 251.8M809.7 161.2Q851.8 171.7 888.7 193.4M827.5 227.6Q861.9 240.5 888.8 255.5M855.7 181.5Q891.1 197.3 920.9 219.5M852.5 162.5Q899.5 182 937.7 217.1M883.8 259.1Q907.5 271 926.4 278.1M879.7 186.7Q917.5 207.3 947.2 236.9M712.8 184Q763 200.3 804.7 220.5M905.7 252.6Q920.8 259.9 931.2 265.1M750.5 141.7Q785.8 146.4 821.9 154.1M909.9 231.4Q924.6 242.2 943.3 253.7M805.8 165.6Q853.9 182.2 892 203.3M872.7 202Q900.4 219 929.1 236.4M764.4 136.6Q793.6 141 825.1 149.3M721.7 187.8Q758.2 199.8 792.5 214.4M795.7 145Q813.5 149 827.2 156.5M751.7 140.9Q788.8 140.3 820.1 149.5M710.7 162.4Q737.1 167.4 759.9 170.6M862.6 174.5Q887.9 188.9 910.5 204.9M827 186.4Q847.1 193.2 867.9 202.5M734.5 152.4Q771.8 155.7 807.5 167.1M722.7 185.1Q745.4 193.6 765.3 197.7M768.7 132.8Q799.9 137.4 828.7 144.2M887.4 184.2Q902.4 196.7 919.2 207.2M912 216.2Q926.9 229.2 944.8 244.4M873.7 254.9Q888.4 261.4 909.5 271.7M844.5 216.3Q857 222.9 868.5 228.8M877.6 247.7Q898.5 258.8 918.6 269.8M914.6 186.1Q932.4 203.7 949.8 219.5" stroke="#fff" stroke-width="1" fill="none"/>
<path d="M612.7 218.9Q605.3 235.1 598.7 253.7M666.8 162.4Q650.7 190.6 632.5 223.4M659.7 198.6Q646.8 223.9 634.1 253.7M673.3 165.4Q662.3 187.7 654.3 209.2M617.8 197.8Q599 229.3 585.4 274.4M663.5 178.6Q656.1 197.8 647.1 216.9M637.8 243Q626 268.6 612.1 298M651.4 154.4Q630.5 170.5 612 195.6M627.5 225.9Q617 248.9 604.1 279.1M627.3 183.4Q610.8 203.7 600.1 230.4M646 193.2Q634 217.9 621 244.4M599.8 265Q591.2 286.3 583.3 313.9M631.4 249.2Q617.8 272.9 607.2 302.3M621.9 227.7Q612.3 249.6 604.3 273.8M674 158Q670.2 171.3 663.2 184.4M592.9 255Q583.2 278.3 575.1 310.6M636.2 177.9Q610.7 209.5 592.7 255.5M636.1 168.4Q615.2 195.2 599.6 229.3" stroke="#fff" stroke-width="1" fill="none"/>
<path d="M656.5 185Q643.9 207.8 631.1 235.7M650.1 184Q642.5 199.1 631.9 215.1M668.3 172.5Q661.1 187.8 651.6 204.6M634.5 246.2Q624 267.2 612.4 291.6M663.1 169.4Q648.8 191 636.5 215M628.1 242.9Q620.5 258.1 611.9 276.2" stroke="#fff" stroke-width="2" fill="none"/>
<path d="M674.1 174.1L683 182.3L692.5 189.8L702.7 196.6L713.4 202.8L724.5 208.4L736.2 213.5L748.2 218L760.7 221.8L773.6 225.1L786.9 227.6L800.5 229.5L814.5 230.4L814.9 228.1L801.5 224.2L788.5 220.4L775.9 216.5L763.6 212.5L751.7 208.2L740.1 203.8L728.8 199L717.8 194.1L707 188.9L696.4 183.5L686 177.9L675.6 172.2ZM677.1 171.7L681.8 174.7L686.8 177.7L692.3 180.6L698.2 183.4L704.5 186.2L711.2 188.9L718.3 191.6L725.9 194.2L733.8 196.7L742.1 199.1L750.8 201.4L760 203.7L760 203.5L751.1 200.7L742.5 197.9L734.3 195.2L726.4 192.4L719 189.7L711.9 187.1L705.2 184.4L698.9 181.8L693 179.2L687.4 176.6L682.1 174L677.3 171.5ZM669.5 195.8L668.9 200.8L668.2 205.7L667.6 210.6L666.9 215.5L666.1 220.4L665.4 225.2L664.5 230.1L663.7 234.9L662.8 239.7L661.8 244.6L660.8 249.5L659.8 254.3L660.2 254.5L662.1 249.8L663.8 245.1L665.4 240.4L666.7 235.5L667.8 230.7L668.7 225.8L669.4 220.8L669.9 215.9L670.2 210.9L670.3 205.9L670.2 200.8L669.9 195.8ZM673.9 217.7L675.1 221.8L676.4 225.9L677.8 229.9L679.2 233.8L680.7 237.7L682.3 241.6L684 245.4L685.8 249.2L687.6 252.9L689.5 256.6L691.5 260.3L693.6 263.8L693.9 263.7L692.4 259.9L690.9 256L689.3 252.2L687.8 248.3L686.2 244.5L684.5 240.7L682.9 236.8L681.2 233L679.5 229.2L677.8 225.3L676 221.5L674.2 217.6ZM695.8 205.2L697.1 209.2L698.5 213.1L700.1 217.1L701.8 221.1L703.7 225.2L705.7 229.2L707.9 233.3L710.3 237.4L712.7 241.6L715.4 245.7L718.2 249.8L721.1 254L721.4 253.9L719 249.3L716.8 244.9L714.5 240.5L712.3 236.3L710.2 232.1L708 228L705.9 224L703.9 220.1L701.9 216.2L699.9 212.5L698 208.8L696.1 205.1ZM699.8 205.6L702.8 210L706 214.4L709.3 218.6L712.8 222.8L716.5 226.8L720.3 230.8L724.3 234.7L728.4 238.5L732.6 242.1L737 245.7L741.5 249.1L746.2 252.5L746.3 252.3L742 248.6L737.7 244.8L733.5 241.1L729.5 237.3L725.5 233.4L721.6 229.6L717.8 225.6L714 221.7L710.4 217.7L706.8 213.7L703.3 209.6L699.9 205.4ZM725.6 221.2L728.6 224.1L731.7 227.1L734.8 230L738.1 232.8L741.4 235.7L744.8 238.5L748.2 241.2L751.7 244L755.3 246.7L759 249.4L762.7 252L766.5 254.6L766.6 254.5L763 251.6L759.4 248.8L755.9 245.9L752.4 243.1L749 240.3L745.5 237.5L742.1 234.8L738.8 232L735.5 229.2L732.2 226.5L728.9 223.8L725.7 221.1ZM758.3 231.9L762.1 236.3L766.1 240.5L770.3 244.4L774.7 248.1L779.2 251.5L783.8 254.7L788.6 257.6L793.4 260.3L798.4 262.7L803.5 264.8L808.7 266.7L814 268.3L814.2 267.7L809.4 265.1L804.7 262.4L800 259.6L795.4 256.8L790.8 253.9L786.2 251L781.6 248L777.1 244.9L772.5 241.7L767.9 238.4L763.3 235L758.6 231.6ZM772.4 231.8L776.5 234.6L780.6 237.2L784.7 239.7L788.8 242.1L792.9 244.4L797.1 246.5L801.4 248.6L805.6 250.5L809.9 252.4L814.1 254.1L818.5 255.7L822.8 257.2L822.8 257L818.7 255.1L814.5 253.2L810.4 251.2L806.2 249.2L802 247.2L797.9 245.1L793.7 243L789.5 240.8L785.3 238.6L781 236.3L776.8 234L772.6 231.7ZM795.9 224.3L798.1 226.1L800.2 227.8L802.2 229.6L804.2 231.5L806.1 233.4L808 235.3L809.8 237.2L811.6 239.2L813.3 241.3L814.9 243.4L816.5 245.5L818.1 247.7L818.2 247.6L816.9 245.3L815.5 243L814 240.7L812.4 238.6L810.7 236.5L808.9 234.5L807 232.5L804.9 230.7L802.8 228.9L800.6 227.3L798.4 225.7L796 224.2ZM797.5 224.8L799.1 225.6L800.7 226.4L802.2 227L803.8 227.6L805.3 228.1L806.7 228.4L808.2 228.7L809.6 228.9L810.9 229L812.2 229L813.5 228.9L814.7 228.7L814.7 228.6L813.5 228.4L812.3 228.3L811 228.1L809.7 227.8L808.4 227.6L807 227.3L805.6 226.9L804.1 226.5L802.5 226.1L800.9 225.7L799.3 225.2L797.5 224.7Z" fill="#000"/>
<path d="M620 306C626 304 630 302 636 298C646 288 665 282 682 287C692 291 700 293 705 292C700 294 698 296 704 298C696 300 692 304 688 309C680 319 664 322 652 317C642 313 634 306 627 304Z" fill="#000"/>
<path d="M777 299C784 298 790 296 794 294C802 284 820 281 836 284C846 287 856 288 862 288C857 290 855 292 856 296C857 304 846 313 830 315C814 317 800 310 792 303C788 300 782 301 776 303C782 301 784 300 777 299Z" fill="#000"/>
<path d="M698.8 442.5C697.5 440.9 703.5 438.9 710 438C716.5 437.1 730.4 437.5 737.5 437C744.6 436.5 745.4 434.8 752.5 435C759.6 435.2 777.9 436.2 780 438C782.1 439.8 770 443.7 765 445.5C760 447.3 755 447.8 750 448.8C745 449.7 740.4 451.5 735 451.2C729.6 451 723.5 449 717.5 447.5C711.5 446 700 444.1 698.8 442.5Z" fill="#000"/>
<path d="M621.6 300.2 L631 298.5M618 305 L630 302M694.5 293.7 L704 292M694.5 298.6 L703.6 298M777 298 L791.7 297M775.5 306.7 L790 303.4M851.7 288.8 L861.4 287.9" stroke="#000" stroke-width="1.05" fill="none" stroke-linecap="round" stroke-linejoin="round"/>
<path d="M645.9 637.4C647.5 636.8 652.6 635.4 655.2 633.7C657.8 632 660.3 630 661.7 627.2C663.1 624.4 663.2 618.7 663.5 617" stroke="#000" stroke-width="1.25" fill="none" stroke-linecap="round" stroke-linejoin="round"/>
<path d="M589.5 436.2C589.8 436.9 590.3 439 591.2 440C592.2 441 594.4 441.7 595 442M624.6 609.6C622.9 611.9 617.4 618.9 614.4 623.5C611.5 628.1 609.2 632.6 607 637.4C604.9 642.2 602.4 647.3 601.5 652.2C600.6 657.2 600.9 666.7 601.5 667C602.1 667.3 604 657.8 605.2 654.1C606.4 650.4 608.3 647.1 608.9 644.8C609.5 642.5 608.9 641 608.9 640.2M608.9 644.8C609.5 645.3 611.4 647.9 612.6 647.6C613.8 647.3 614.8 645.4 616.3 643C617.8 640.5 620.2 636.6 621.9 632.8C623.5 628.9 626 620 626.5 619.8C626.9 619.7 625.2 628.3 624.6 631.9C624 635.4 622.3 638.8 622.8 641.1C623.2 643.4 625.4 644.4 627.4 645.7C629.4 647.1 630.6 647.5 634.8 649.4C639 651.4 649.5 656 652.4 657.3" stroke="#000" stroke-width="1.35" fill="none" stroke-linecap="round" stroke-linejoin="round"/>
<path d="M597.5 356.2C601.2 354 611.5 345.8 620 342.5C628.5 339.2 644 337.3 648.8 336.2M823.8 323.8C829 324.8 844.8 326.7 855 330C865.2 333.3 880 341.5 885 343.8" stroke="#000" stroke-width="1.45" fill="none" stroke-linecap="round" stroke-linejoin="round"/>
<path d="M579.2 393.8C579 394.8 577.9 398 578 400C578.1 402 579.7 404.6 580 405.5M687.5 448.8C690.4 449.4 701 451.5 705 452.5C709 453.5 710.2 454.6 711.2 455M798.8 440C795.6 440.8 786.5 442.9 780 445C773.5 447.1 766.2 449.2 760 452.5C753.8 455.8 743.3 463.7 742.5 465C741.7 466.3 752.9 461.2 755 460.5M753.3 798.9C753.7 800 753 804.1 755.6 805.6C758.1 807 762.2 808 768.9 807.8C775.6 807.6 787.4 804.8 795.6 804.4C803.7 804.1 810.4 804.4 817.8 805.6C825.2 806.7 832.6 810.6 840 811.1C847.4 811.7 856.3 809.8 862.2 808.9C868.1 808 870.7 805.9 875.6 805.6C880.4 805.2 886.5 805.7 891.1 806.7C895.7 807.6 901.3 810.4 903.3 811.1M680 497.5C678.3 502.1 673.1 515.4 670 525C666.9 534.6 662.9 545 661.2 555C659.6 565 660.2 580 660 585M715 542.5C713.3 545.4 707.5 554.6 705 560C702.5 565.4 700.8 572.5 700 575M660.7 584.6C657.7 586.6 646.7 593.4 642.2 596.7C637.7 599.9 637.3 602.2 633.9 604.1C630.5 605.9 626 605.3 621.9 607.8C617.7 610.2 613.2 614.4 608.9 618.9C604.6 623.4 599.3 629.7 595.9 634.6C592.5 639.6 590.1 644.5 588.5 648.5C586.9 652.5 585.4 659 586.2 658.7C587 658.4 591.4 649.8 593.1 646.7C594.9 643.5 594.5 640.8 596.9 639.7C599.2 638.6 605.3 640.1 607 640.2M649.6 613.3C648.7 616.1 646.4 627.4 644.1 630C641.8 632.6 637.3 630.3 635.7 629.1C634.2 627.8 633.4 624 634.8 622.6C636.2 621.2 642.5 621 644.1 620.7M635.7 629.1C634.9 630.3 630.2 633.9 630.6 636.5C631.1 639.1 636.9 642.8 638.5 644.8C640.1 646.8 639.1 649.8 640.4 648.5C641.6 647.3 646.9 639.2 645.9 637.4C645 635.6 636.7 637.8 634.8 637.9" stroke="#000" stroke-width="1.55" fill="none" stroke-linecap="round" stroke-linejoin="round"/>
<path d="M735 480C737.5 479.4 744.6 476 750 476.2C755.4 476.5 764.6 480.4 767.5 481.2" stroke="#000" stroke-width="1.65" fill="none" stroke-linecap="round" stroke-linejoin="round"/>
<path d="M677.5 443.8C681.7 441.9 694.2 436.2 702.5 432.5C710.8 428.8 721.2 422.5 727.5 421.2C733.8 420 735.8 425.2 740 425C744.2 424.8 746.7 419.8 752.5 420C758.3 420.2 767.1 424.2 775 426.2C782.9 428.3 795.8 431.5 800 432.5M872.5 477.5C879.6 473.8 903.3 462.3 915 455C926.7 447.7 937.9 437.3 942.5 433.8" stroke="#000" stroke-width="1.75" fill="none" stroke-linecap="round" stroke-linejoin="round"/>
<path d="M561.2 405C558.1 409.6 549.4 424.2 542.5 432.5C535.6 440.8 526.3 448.5 520 455C513.7 461.5 512.4 465.4 504.7 471.3C496.9 477.2 482.6 483.3 473.4 490.6C464.1 497.8 456.9 506.2 449.3 514.6C441.7 523.1 433.6 531.1 427.6 541.1C421.6 551.2 417.6 564.4 413.2 574.8C408.8 585.3 405.9 593.7 401.1 603.7C396.3 613.8 388.3 628.2 384.3 635C380.3 641.9 380.7 641.3 377.1 644.7C373.4 648.1 367 652.5 362.6 655.5C358.2 658.5 354.2 661.9 350.6 662.7C347 663.5 342.5 660.7 340.9 660.3M377.1 643.5C372.2 643.5 355.8 642.5 348.2 643.5C340.5 644.5 335.1 646.5 331.3 649.5C327.5 652.5 325.3 657.9 325.3 661.5C325.3 665.1 327.5 669 331.3 671.2C335.1 673.4 341.3 674.8 348.2 674.8C355 674.8 364.2 673.6 372.2 671.2C380.3 668.8 389.1 664.7 396.3 660.3C403.5 655.9 409.6 651.7 415.6 644.7C421.6 637.6 427.6 627 432.4 618.2C437.3 609.4 440.5 600.5 444.5 591.7C448.5 582.9 451.7 573.6 456.5 565.2C461.3 556.8 466.1 550.4 473.4 541.1C480.6 531.9 490.6 519.1 499.9 509.8C509.1 500.6 517.9 493.4 528.8 485.8C539.6 478.1 556 468.9 564.9 464.1C573.7 459.3 575.7 459.1 581.7 456.9C587.7 454.6 597.8 451.8 601 450.8M777.5 352.5C778.8 354 782.7 359.2 785 361.2C787.3 363.3 790 362.7 791.2 365C792.5 367.3 792.3 373.3 792.5 375M770 370C771.2 368.8 775.2 366.2 777.5 366.2C779.8 366.2 783.8 368.5 783.8 370C783.8 371.5 779.8 374.4 777.5 375C775.2 375.6 771.2 374.6 770 373.8C768.8 372.9 768.8 371.2 770 370ZM730 510C735 510.6 750 514.8 760 513.8C770 512.7 780 506.7 790 503.8C800 500.8 815 497.5 820 496.2M800 597.5C798.3 606 791.3 641.7 790 648.8C788.7 655.8 792.8 635.9 792.2 640C791.7 644.1 789.1 662.2 786.7 673.3C784.3 684.4 781.5 695.6 777.8 706.7C774.1 717.8 768.9 729.6 764.4 740C760 750.4 755.9 759.6 751.1 768.9C746.3 778.1 739.6 788.1 735.6 795.6C731.5 803 727.8 808.5 726.7 813.3C725.6 818.1 726.7 821.1 728.9 824.4C731.1 827.8 734.4 831.1 740 833.3C745.6 835.6 755.2 837.8 762.2 837.8C769.3 837.8 775.9 834.4 782.2 833.3C788.5 832.2 794.1 830.9 800 831.1C805.9 831.3 811.1 832.4 817.8 834.4C824.4 836.5 832.6 842.8 840 843.3C847.4 843.9 856.3 839.1 862.2 837.8C868.1 836.5 870 835.6 875.6 835.6C881.1 835.6 889.3 837.6 895.6 837.8C901.9 838 908.5 838.1 913.3 836.7C918.1 835.2 922.6 832.4 924.4 828.9C926.3 825.4 926.3 821.1 924.4 815.6C922.6 810 917.8 804.1 913.3 795.6C908.9 787 902.2 774.8 897.8 764.4C893.3 754.1 890 743.7 886.7 733.3C883.3 723 880 712.2 877.8 702.2C875.6 692.2 874.4 683.7 873.3 673.3C872.2 663 871.2 655.6 871.1 640C871 624.4 872.3 590 872.5 580M915 455C917.9 461.2 926.7 477.9 932.5 492.5C938.3 507.1 944.6 525.8 950 542.5C955.4 559.2 960.2 580.2 965 592.5C969.8 604.8 972.7 606.9 978.7 616.1C984.6 625.2 995.5 639.2 1000.7 647.5C1006 655.9 1007.5 660.4 1010.2 666.4C1012.8 672.5 1015.4 680.9 1016.5 683.7" stroke="#000" stroke-width="1.85" fill="none" stroke-linecap="round" stroke-linejoin="round"/>
<path d="M566.2 383.8 L561.2 405M728.8 347.5C726.9 348.3 720.3 350.2 717.5 352.5C714.7 354.8 712.8 358.2 712 361.2C711.2 364.2 712.4 369 712.5 370.5M830 403.8C831.2 405.6 836.5 408.1 837.5 415C838.5 421.9 838.3 431.7 836.2 445C834.2 458.3 829 480 825 495C821 510 814.6 528.3 812.5 535M893.8 397.5C891.5 401.2 883.5 410.4 880 420C876.5 429.6 874.2 441.7 872.5 455C870.8 468.3 870 487.1 870 500C870 512.9 872.1 527.1 872.5 532.5M1016.5 666.4C1018 668 1021.7 675.1 1025.9 675.9C1030.1 676.7 1035.9 673.3 1041.6 671.2C1047.4 669.1 1052.7 664.3 1060.5 663.3C1068.4 662.2 1081 663.3 1088.9 664.9C1096.7 666.4 1103 669.6 1107.7 672.7C1112.5 675.9 1117.2 680.1 1117.2 683.7C1117.2 687.4 1114.6 692.1 1107.7 694.8C1100.9 697.4 1087.3 699.5 1076.3 699.5C1065.3 699.5 1051.6 697.4 1041.6 694.8C1031.7 692.1 1020.7 685.6 1016.5 683.7" stroke="#000" stroke-width="1.95" fill="none" stroke-linecap="round" stroke-linejoin="round"/>
<path d="M961.2 365C959.6 367.9 953.1 376 951.2 382.5C949.4 389 950.1 404.2 950 403.8C949.9 403.3 950.6 377.1 950.4 380C950.2 382.9 949.1 414.1 948.8 420.9M963.8 360C962.7 364.2 958.5 377.7 957.5 385C956.5 392.3 957.9 404.6 958 403.8C958.1 402.9 958.5 376.1 958.2 380C958 383.9 955.3 409.9 956.7 427.2C958 444.5 961.9 466 966.1 483.9C970.3 501.7 976.1 518.5 981.8 534.2C987.6 550 993.4 564.1 1000.7 578.3C1008.1 592.5 1019.6 609.8 1025.9 619.2C1032.2 628.7 1030.6 627.9 1038.5 635C1046.4 642 1067.3 657.3 1073.1 661.7M581.2 457.5C584.8 460.4 592.7 470 602.5 475C612.3 480 626.7 484 640 487.5C653.3 491 675.4 494.8 682.5 496.2" stroke="#000" stroke-width="2.15" fill="none" stroke-linecap="round" stroke-linejoin="round"/>
<path d="M878.8 535C873.1 534.6 856.9 531.7 845 532.5C833.1 533.3 822.1 536.2 807.5 540C792.9 543.8 774.2 549.4 757.5 555C740.8 560.6 723.8 568.5 707.5 573.8C691.2 579 671.2 582.3 660 586.2C648.8 590.2 646.7 593.8 640 597.5C633.3 601.2 626.2 604.2 620 608.8C613.8 613.3 607.5 619 602.5 625C597.5 631 592.1 641.7 590 645" stroke="#000" stroke-width="2.35" fill="none" stroke-linecap="round" stroke-linejoin="round"/>
<path d="M660 140C656.7 142.5 647.9 147.5 640 155C632.1 162.5 622.1 172.5 612.5 185C602.9 197.5 590.8 215 582.5 230C574.2 245 567.7 259.6 562.5 275C557.3 290.4 553.8 310 551.2 322.5C548.7 335 547 341.2 547 350C547 358.8 549.1 366 551.2 375C553.4 384 558.3 398.8 560 403.8C561.7 408.8 561 404.8 561.2 405M817.5 140C822.1 141.5 836.2 145.4 845 148.8C853.8 152.1 859.2 154 870 160C880.8 166 897.5 175.8 910 185C922.5 194.2 935.8 204.6 945 215C954.2 225.4 960 235.8 965 247.5C970 259.2 973.1 273.8 975 285C976.9 296.2 977.3 304.6 976.5 315C975.7 325.4 972.5 339.2 970 347.5C967.5 355.8 962.7 362.1 961.2 365M760 327.5C761.2 330 765.3 337.9 767.5 342.5C769.7 347.1 772.2 351.2 773 355C773.8 358.8 773.8 362.3 772.5 365C771.2 367.7 767.9 369.9 765 371.2C762.1 372.6 758.8 373.2 755 373C751.2 372.8 745.8 371.5 742.5 370C739.2 368.5 737.5 365.1 735 363.8C732.5 362.4 729.8 361.6 727.5 362C725.2 362.4 722.5 364.8 721.2 366.2C720 367.7 720.2 369.8 720 370.5M872.5 495C875.4 495.1 884.6 493 890 495.5C895.4 498 902.1 504.2 905 510C907.9 515.8 909.2 522.5 907.5 530C905.8 537.5 901.2 547.1 895 555C888.8 562.9 880.4 571.2 870 577.5C859.6 583.8 849.2 588.3 832.5 592.5C815.8 596.7 792.9 599 770 602.5C747.1 606 711.7 612.5 695 613.8C678.3 615 674.2 610.6 670 610M663.5 617C664.1 616.3 665.4 613.6 667.2 612.4C669.1 611.2 670.9 610.2 674.6 609.6C678.3 609.1 687 609.2 689.4 609.2M681.1 611.5C683.4 611.9 690.4 614.2 695 614.3C699.6 614.3 703.1 613 708.9 611.9C714.7 610.9 726.5 608.5 730 607.8" stroke="#000" stroke-width="2.55" fill="none" stroke-linecap="round" stroke-linejoin="round"/>
<path d="M717.5 451.2C714.6 453.5 704.6 459 700 465C695.4 471 690.8 480 690 487.5C689.2 495 691.7 502.9 695 510C698.3 517.1 703.8 524.2 710 530C716.2 535.8 724.6 541.2 732.5 545C740.4 548.8 753.3 551.2 757.5 552.5M748.8 452.5C746.5 455 738.8 461.7 735 467.5C731.2 473.3 727.5 481.2 726.2 487.5C725 493.8 725.6 500.4 727.5 505C729.4 509.6 732.1 512.1 737.5 515C742.9 517.9 750.8 521.2 760 522.5C769.2 523.8 783.3 523.3 792.5 522.5C801.7 521.7 811.2 518.3 815 517.5M683 611.5C682.3 613.6 680.3 619.7 679.3 624.4C678.2 629.2 676.9 635.4 676.5 640.2C676 645 675.9 651 676.5 653.1C677.1 655.3 679.7 654.5 680.2 653.1C680.6 651.8 678.6 646.8 679.3 644.8C679.9 642.8 682.5 641.1 683.9 641.1C685.3 641.1 687 643 687.6 644.8C688.2 646.7 688.7 650.1 687.6 652.2C686.5 654.4 684.5 656.2 681.1 657.8C677.7 659.3 671.9 660.6 667.2 661.5C662.6 662.3 657.8 662.9 653.3 662.9C648.9 662.9 643.3 662.5 640.4 661.5C637.4 660.5 636 658.2 635.7 656.9C635.4 655.5 638.1 653.8 638.5 653.1" stroke="#000" stroke-width="2.75" fill="none" stroke-linecap="round" stroke-linejoin="round"/>
</svg>
<!-- RIGHT DOCK -->
<div class="abs" style="left:1520px;top:67px;width:162px;height:20px;background:#262626"></div>
<div class="abs" style="left:1520px;top:87px;width:399px;height:297px;background:#3b3b3b;border:1px solid #575757"></div>
<div class="abs" style="left:1613px;top:64px;width:25px;height:24px;background:#3b3b3b;border:1px solid #575757;border-bottom:none"></div>
<div class="abs" style="left:1523px;top:68px;width:18px;height:18px;background:radial-gradient(circle at 50% 50%,#000 0,#222 12%,#999 32%,#fff 52%);border:1px solid #111"></div>
<div class="abs" style="left:1547px;top:68px;width:18px;height:18px;border:1px solid #111;background:linear-gradient(90deg,#e8902a,#fbc046 15%,#f6a636 30%,#fdd070 45%,#f7a838 55%,#fcc858 70%,#f09a30 85%,#fbbf50)"></div>
<div class="abs" style="left:1571px;top:68px;width:18px;height:18px;border:1px solid #111;background:#fff;color:#000;font-weight:bold;font-size:11px;text-align:center;line-height:16px;letter-spacing:-.6px">Aa</div>
<div class="abs" style="left:1595px;top:69px;width:15px;height:16px;border:1px solid #111;background:#e4effa"></div>
<div class="abs" style="left:1639px;top:68px;width:18px;height:18px;border:1px solid #111;background:linear-gradient(90deg,#000,rgba(0,0,0,0) 95%),repeating-conic-gradient(#666 0 25%,#999 0 50%) 0 0/8px 8px"></div>
<svg style="left:1520px;top:64px" width="400" height="26" viewBox="1520 64 400 26">
<path d="M1598 73l1.500-3" stroke="#5a7aaa" stroke-width="1.200"/>
<path d="M1536 81.500h4M1538 79.500v4" stroke="#3040c0" stroke-width="1"/>
<path d="M1633 68.500l.800.500-7.500 11.500-2-1.500z" fill="#c2c2c2"/><path d="M1624 79.500l2 1.500c-1 2.500-4 3-7.500 2.500 3-.5 3.500-3 5.500-4z" fill="#c2c2c2"/>
<g fill="#cfcfcf"><path d="M1663 77h16v8h-16z"/></g>
<g fill="#262626"><circle cx="1666" cy="79" r=".900"/><circle cx="1669" cy="79" r=".900"/><circle cx="1672" cy="79" r=".900"/><circle cx="1675" cy="79" r=".900"/><circle cx="1667.500" cy="81.500" r=".900"/><circle cx="1670.500" cy="81.500" r=".900"/><circle cx="1673.500" cy="81.500" r=".900"/><circle cx="1676.500" cy="81.500" r=".900"/></g>
<g fill="#cfcfcf"><rect x="1664" y="74" width="2" height="2"/><rect x="1668" y="74" width="2" height="2"/><rect x="1672" y="74" width="2" height="2"/><rect x="1676" y="74" width="2" height="2"/><rect x="1666" y="72" width="2" height="2"/><rect x="1670" y="72" width="2" height="2"/><rect x="1674" y="72" width="2" height="2"/><rect x="1668" y="70" width="2" height="1.500"/><rect x="1672" y="70" width="2" height="1.500"/></g>
<rect x="1904.500" y="71.500" width="9" height="9" fill="none" stroke="#9a9a9a"/><path d="M1911.500 73v6l-5-3z" fill="#c2c2c2"/>
</svg>
<div class="abs" style="left:1523px;top:92px;width:392px;height:16px;background:#202020"></div>
<div class="lbl" style="left:1526px;top:95px">2. Hardness 050</div>
<div class="abs" style="left:1523px;top:111px;width:393px;height:135px;background:#fff"></div>
<div class="abs" style="left:1695px;top:153px;width:50px;height:50px;background:radial-gradient(circle at 50% 50%,#000 0,#060606 14%,#555 30%,#a8a8a8 42%,#e2e2e2 54%,#fff 68%)"></div>
<svg style="left:1908px;top:238px" width="8" height="8"><path d="M8 1v7h-7z" fill="#6878e0"/></svg>
<div class="lbl" style="left:1522px;top:255px;color:#b8b8b8">Shape:</div>
<div class="btn" style="left:1558px;top:248px;width:26px;height:25px"></div>
<svg style="left:1560px;top:250px" width="80" height="22" viewBox="1560 250 80 22">
<circle cx="1571" cy="260.500" r="6.200" fill="#aaa"/><rect x="1591" y="254.500" width="12" height="12" fill="#aaa"/><path d="M1623 253.500l7 7-7 7-7-7z" fill="#aaa"/>
</svg>
<!-- disabled sliders -->
<div class="abs dsl" style="top:276px"><i style="width:9px"></i><b>R</b><s style="left:9px">adius</s><u>25.0</u></div>
<div class="abs dsl" style="top:294px"><s style="left:1px">Spikes</s><u>2</u></div>
<div class="abs dsl" style="top:312px"><i style="width:191px"></i><b>Hardness</b><u>0.50</u></div>
<div class="abs dsl" style="top:330px"><s style="left:1px">Aspect ratio</s><u>1.0</u></div>
<div class="abs dsl" style="top:348px"><s style="left:1px">Angle</s><u>0.0</u></div>
<div class="abs dsl" style="top:366px"><i style="width:16px"></i><b>Sp</b><s style="left:15px">acing</s><u>10.0</u></div>
<svg style="left:1900px;top:274px" width="20" height="110" viewBox="1900 274 20 110">
<g opacity=".28"><use href="#spn" x="1906" y="276.5"/><use href="#spn" x="1906" y="294.5"/><use href="#spn" x="1906" y="312.5"/><use href="#spn" x="1906" y="330.5"/><use href="#spn" x="1906" y="348.5"/><use href="#spn" x="1906" y="366.5"/></g>
</svg>
<div class="abs" style="left:1710px;top:385px;width:4px;height:2px;background:#aaa"></div><div class="abs" style="left:1717px;top:385px;width:4px;height:2px;background:#aaa"></div><div class="abs" style="left:1724px;top:385px;width:4px;height:2px;background:#aaa"></div>
<!-- Layers dock -->
<div class="abs" style="left:1579px;top:389px;width:121px;height:21px;background:#262626"></div>
<div class="abs" style="left:1647px;top:389px;width:1px;height:21px;background:#3a3a3a"></div>
<div class="abs" style="left:1520px;top:409px;width:399px;height:671px;background:#3b3b3b;border:1px solid #575757;border-bottom:none"></div>
<div class="abs" style="left:1520px;top:388px;width:59px;height:22px;background:#3b3b3b;border:1px solid #575757;border-bottom:none"></div>
<div class="lbl" style="left:1540px;top:394px">Layers</div>
<div class="lbl" style="left:1598px;top:395px">Channels</div>
<div class="lbl" style="left:1668px;top:395px">Paths</div>
<svg style="left:1520px;top:388px" width="400" height="24" viewBox="1520 388 400 24">
<g fill="#c8c8c8"><path d="M1526 391h12l-3.500 3.500h-12z"/><path d="M1526 397h12l-3.500 3.500h-12z"/><path d="M1526 403h12l-3.500 3.500h-12z"/></g>
<rect x="1581" y="392.500" width="14" height="14" rx="1.500" fill="none" stroke="#c8c8c8" stroke-width="1.200"/><path d="M1585 394.500v10M1588 394.500v10M1591 394.500v10" stroke="#c8c8c8" stroke-width="1.500"/>
<g fill="none" stroke="#c8c8c8" stroke-width="1.600"><path d="M1650.500 405c1-5 4-7.500 7.500-7.500s6.500 2.500 7.500 7.500"/><path d="M1650 397h16" stroke-width="1.200"/></g>
<g fill="#c8c8c8"><rect x="1656" y="395" width="4" height="4"/><rect x="1649.500" y="395.500" width="3" height="3"/><rect x="1663.500" y="395.500" width="3" height="3"/></g>
<rect x="1904.500" y="395.500" width="9" height="9" fill="none" stroke="#9a9a9a"/><path d="M1911.500 397v6l-5-3z" fill="#c2c2c2"/>
</svg>
<div class="btn" style="left:1522px;top:413px;width:348px;height:27px"></div>
<div class="lbl" style="left:1529px;top:422px">Mode</div>
<div class="lbl" style="left:1809px;top:422px">Normal</div>
<div class="btn" style="left:1871px;top:413px;width:46px;height:27px"></div>
<div class="spin" style="left:1522px;top:442px;width:395px"><div class="fill" style="width:381px"></div><div class="l">Opacity</div><div class="v" style="right:14px">100.0</div></div>
<div class="lbl" style="left:1522px;top:467px">Lock:</div>
<svg style="left:1520px;top:410px" width="400" height="75" viewBox="1520 410 400 75">
<path d="M1851.500 424l5 5 5-5M1898.500 424l5 5 5-5" fill="none" stroke="#e0e0e0" stroke-width="1.600"/>
<use href="#rst" x="1877" y="419"/>
<use href="#spn" x="1906" y="443.500"/>
<path d="M1570.500 464.500l.800.500-7.500 11.500-2-1.500z" fill="#c2c2c2"/><path d="M1561.500 475.500l2 1.500c-1 2.500-4 3-7.500 2.500 3-.5 3.500-3 5.500-4z" fill="#c2c2c2"/>
<g transform="translate(1582,464) scale(.9)" fill="#c2c2c2"><path d="M9 0l3.600 4.200H10v3.800h3.800V5.400L18 9l-4.200 3.600V10H10v3.800h2.600L9 18l-3.600-4.200H8V10H4.200v2.600L0 9l4.200-3.600V8H8V4.200H5.400z"/></g>
<g><rect x="1609" y="464" width="16" height="16" fill="#6a6a6a"/><g fill="#b8b8b8"><rect x="1609" y="464" width="4" height="4"/><rect x="1617" y="464" width="4" height="4"/><rect x="1613" y="468" width="4" height="4"/><rect x="1621" y="468" width="4" height="4"/><rect x="1609" y="472" width="4" height="4"/><rect x="1617" y="472" width="4" height="4"/><rect x="1613" y="476" width="4" height="4"/><rect x="1621" y="476" width="4" height="4"/></g></g>
</svg>
<!-- layer list -->
<div class="abs" style="left:1522px;top:484px;width:394px;height:567px;background:#303030;border-radius:3px"></div>
<div class="abs" style="left:1522px;top:548px;width:394px;height:31px;background:#222"></div>
<div class="abs" style="left:1598px;top:488px;width:36px;height:27px;border:2px solid #0a0a0a;background:repeating-conic-gradient(#707070 0 25%,#8e8e8e 0 50%) 0 0/8px 8px"></div>
<div class="abs" style="left:1598px;top:519px;width:36px;height:27px;border:2px solid #0a0a0a;background:repeating-conic-gradient(#707070 0 25%,#8e8e8e 0 50%) 0 0/8px 8px"></div>
<div class="abs" style="left:1598px;top:550px;width:36px;height:27px;background:#fff"></div>
<div class="lbl" style="left:1638px;top:496px">Babyhead.png</div>
<div class="lbl" style="left:1638px;top:527px">GreyLayer</div>
<div class="abs" style="left:1635px;top:553px;width:95px;height:20px;border:1px dotted #e8e8e8"></div>
<div class="lbl" style="left:1638px;top:558px;color:#f0f0f0">White Background</div>
<svg style="left:1520px;top:484px" width="400" height="596" viewBox="1520 484 400 596">
<defs><g id="eye"><path d="M-9 0c3.500-5.500 14.500-5.500 18 0-3.500 5.500-14.500 5.500-18 0z" fill="none" stroke="#d8d8d8" stroke-width="1.500"/><circle r="3.300" fill="none" stroke="#d8d8d8" stroke-width="1.500"/></g></defs>
<use href="#eye" x="1537" y="501.500"/><use href="#eye" x="1537" y="532.500"/><use href="#eye" x="1537" y="563.500"/>
<g fill="none" stroke="#b0b0b0" stroke-width=".600" opacity=".8"><ellipse cx="1614" cy="498" rx="3" ry="3"/><path d="M1612 502l-3 6M1616 502l3 6M1614 502v8"/></g>
<path d="M1753.500 566.500v16l4-3.500 2.800 6 2.200-1-2.800-6h5.300z" fill="#111" stroke="#f4f4f4" stroke-width="1.100"/>
<!-- bottom buttons -->
<g fill="none" stroke="#c8c8c8" stroke-width="1.400">
<path d="M1541 1061.500v10h11v-10l-3-3h-4"/><path d="M1538 1060.500h7M1541.500 1057v7" stroke-width="2"/>
<path d="M1637 1068l6.500-6.500 6.500 6.500" stroke-width="2"/><path d="M1686 1062l6.500 6.500 6.500-6.500" stroke-width="1.600"/>
<rect x="1735.500" y="1059.500" width="8" height="6.500"/><path d="M1740.500 1066v4h8v-6.500h-5"/>
</g>
<g fill="#c8c8c8">
<path d="M1587 1057h6l1.500 2h8.500v12h-16z"/>
<path d="M1786 1058.500h8l-2.500 2.500h-8z M1786 1063h8l-2.500 2.500h-8z M1786 1067.500h8l-2.500 2.500h-8z"/><path d="M1797 1058h2v8.500h2.300l-3.300 4-3.300-4h2.300z"/>
<path d="M1833 1057h12c0 5-2 9-6 9s-6-4-6-9z"/><path d="M1836 1065h9.500l-3.500 5.500h-11z"/>
<path d="M1885 1057h12c1 0 2 1 2 2v10c0 1-1 2-2 2h-12c-1 0-2-1-2-2v-10c0-1 1-2 2-2z"/>
</g>
<path d="M1591 1065.500h8M1595 1061.500v8" stroke="#3b3b3b" stroke-width="2"/>
<path d="M1886.500 1059.500l9 9M1895.500 1059.500l-9 9" stroke="#3b3b3b" stroke-width="2.200"/>
<path d="M1836 1060h2.500M1840 1060h2.500M1837 1063c1.500 1 3 1 4.500 0" stroke="#3b3b3b" stroke-width="1" fill="none"/>
</svg>
<!-- pane handles -->
<div class="abs" style="left:178px;top:564px;width:2px;height:2px;background:#aaa"></div><div class="abs" style="left:178px;top:569px;width:2px;height:2px;background:#aaa"></div><div class="abs" style="left:178px;top:574px;width:2px;height:2px;background:#aaa"></div>
<div class="abs" style="left:1517px;top:562px;width:2px;height:3px;background:#aaa"></div><div class="abs" style="left:1517px;top:568px;width:2px;height:3px;background:#aaa"></div><div class="abs" style="left:1517px;top:574px;width:2px;height:3px;background:#aaa"></div>
</body>
</html>
